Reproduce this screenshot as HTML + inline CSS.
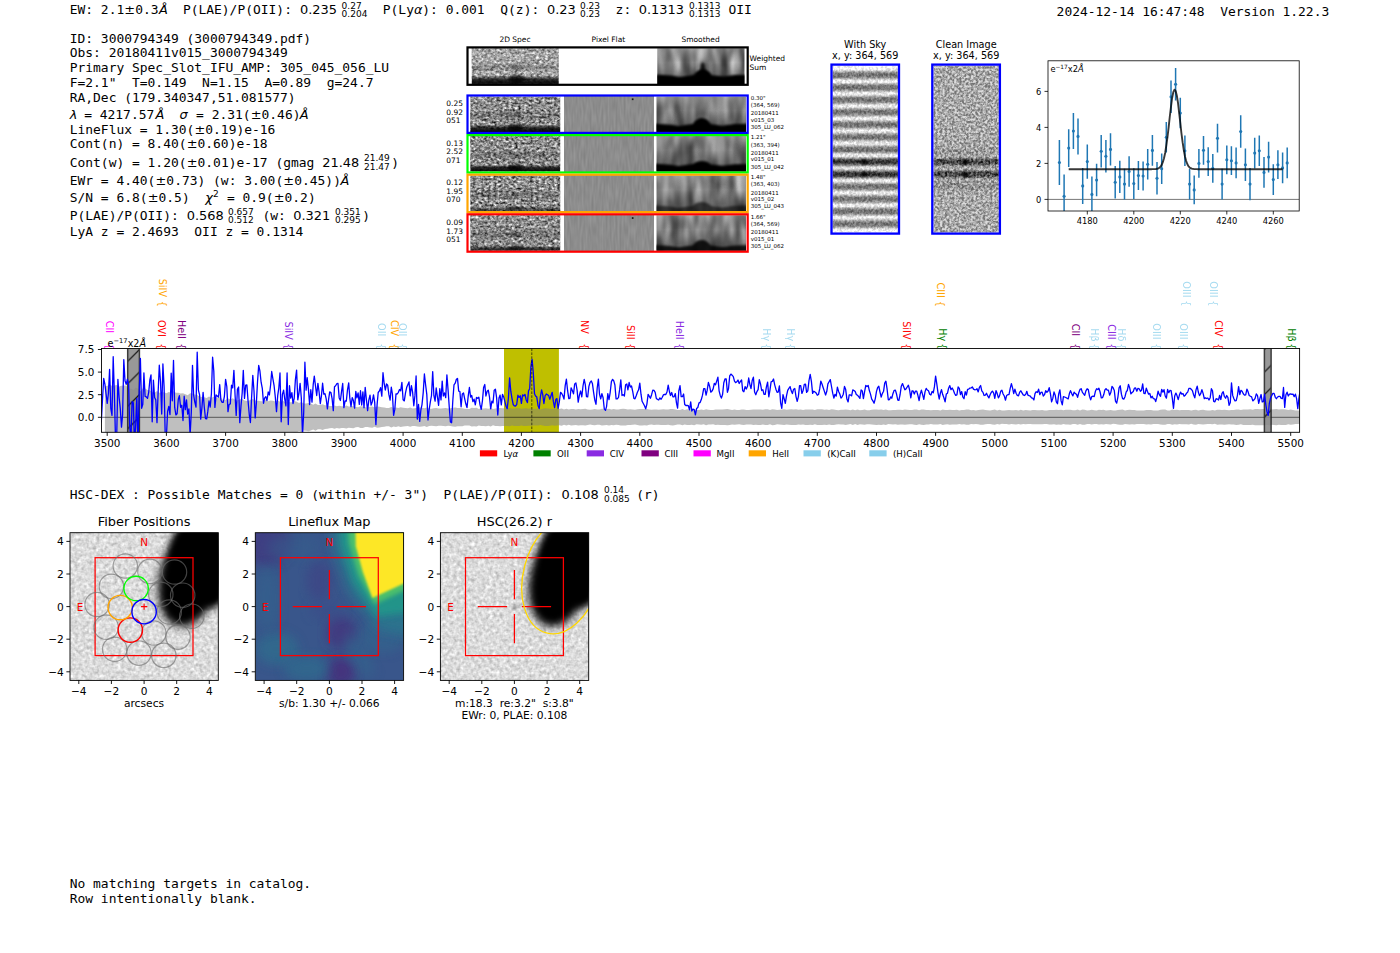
<!DOCTYPE html>
<html><head><meta charset="utf-8"><title>ELiXer report 3000794349</title>
<style>
html,body{margin:0;padding:0;background:#fff;overflow:hidden}
svg{display:block}
text{white-space:pre}
.m{font-family:"DejaVu Sans Mono","Liberation Mono",monospace}
.s{font-family:"DejaVu Sans","Liberation Sans",sans-serif}
.i{font-family:"DejaVu Sans","Liberation Sans",sans-serif;font-style:italic}
</style></head><body>
<svg width="1400" height="953" viewBox="0 0 1400 953">
<rect width="1400" height="953" fill="#fff"/>
<defs>
<filter id="n2d0" x="0" y="0" width="100%" height="100%" color-interpolation-filters="sRGB"><feTurbulence type="fractalNoise" baseFrequency="0.33 0.42" numOctaves="2" seed="3"/><feColorMatrix type="matrix" values="0.85 0.85 0 0 -0.3  0.85 0.85 0 0 -0.3  0.85 0.85 0 0 -0.3  0 0 0 0 1"/></filter>
<filter id="nsm0" x="0" y="0" width="100%" height="100%" color-interpolation-filters="sRGB"><feTurbulence type="fractalNoise" baseFrequency="0.085 0.03" numOctaves="2" seed="43"/><feColorMatrix type="matrix" values="0.55 0.55 0 0 -0.04  0.55 0.55 0 0 -0.04  0.55 0.55 0 0 -0.04  0 0 0 0 1"/></filter>
<filter id="n2d1" x="0" y="0" width="100%" height="100%" color-interpolation-filters="sRGB"><feTurbulence type="fractalNoise" baseFrequency="0.33 0.42" numOctaves="2" seed="8"/><feColorMatrix type="matrix" values="0.85 0.85 0 0 -0.3  0.85 0.85 0 0 -0.3  0.85 0.85 0 0 -0.3  0 0 0 0 1"/></filter>
<filter id="nsm1" x="0" y="0" width="100%" height="100%" color-interpolation-filters="sRGB"><feTurbulence type="fractalNoise" baseFrequency="0.085 0.03" numOctaves="2" seed="48"/><feColorMatrix type="matrix" values="0.55 0.55 0 0 -0.04  0.55 0.55 0 0 -0.04  0.55 0.55 0 0 -0.04  0 0 0 0 1"/></filter>
<filter id="n2d2" x="0" y="0" width="100%" height="100%" color-interpolation-filters="sRGB"><feTurbulence type="fractalNoise" baseFrequency="0.33 0.42" numOctaves="2" seed="15"/><feColorMatrix type="matrix" values="0.85 0.85 0 0 -0.3  0.85 0.85 0 0 -0.3  0.85 0.85 0 0 -0.3  0 0 0 0 1"/></filter>
<filter id="nsm2" x="0" y="0" width="100%" height="100%" color-interpolation-filters="sRGB"><feTurbulence type="fractalNoise" baseFrequency="0.085 0.03" numOctaves="2" seed="55"/><feColorMatrix type="matrix" values="0.55 0.55 0 0 -0.04  0.55 0.55 0 0 -0.04  0.55 0.55 0 0 -0.04  0 0 0 0 1"/></filter>
<filter id="n2d3" x="0" y="0" width="100%" height="100%" color-interpolation-filters="sRGB"><feTurbulence type="fractalNoise" baseFrequency="0.33 0.42" numOctaves="2" seed="21"/><feColorMatrix type="matrix" values="0.85 0.85 0 0 -0.3  0.85 0.85 0 0 -0.3  0.85 0.85 0 0 -0.3  0 0 0 0 1"/></filter>
<filter id="nsm3" x="0" y="0" width="100%" height="100%" color-interpolation-filters="sRGB"><feTurbulence type="fractalNoise" baseFrequency="0.085 0.03" numOctaves="2" seed="61"/><feColorMatrix type="matrix" values="0.55 0.55 0 0 -0.04  0.55 0.55 0 0 -0.04  0.55 0.55 0 0 -0.04  0 0 0 0 1"/></filter>
<filter id="n2d4" x="0" y="0" width="100%" height="100%" color-interpolation-filters="sRGB"><feTurbulence type="fractalNoise" baseFrequency="0.33 0.42" numOctaves="2" seed="34"/><feColorMatrix type="matrix" values="0.85 0.85 0 0 -0.3  0.85 0.85 0 0 -0.3  0.85 0.85 0 0 -0.3  0 0 0 0 1"/></filter>
<filter id="nsm4" x="0" y="0" width="100%" height="100%" color-interpolation-filters="sRGB"><feTurbulence type="fractalNoise" baseFrequency="0.085 0.03" numOctaves="2" seed="74"/><feColorMatrix type="matrix" values="0.55 0.55 0 0 -0.04  0.55 0.55 0 0 -0.04  0.55 0.55 0 0 -0.04  0 0 0 0 1"/></filter>
<filter id="npf" x="0" y="0" width="100%" height="100%" color-interpolation-filters="sRGB"><feTurbulence type="fractalNoise" baseFrequency="0.5 0.08" numOctaves="1" seed="5"/><feColorMatrix type="matrix" values="0.12 0 0 0 0.49  0.12 0 0 0 0.49  0.12 0 0 0 0.49  0 0 0 0 1"/></filter>
<filter id="b1" x="-20%" y="-50%" width="140%" height="200%"><feGaussianBlur stdDeviation="1.1"/></filter>
<filter id="b2" x="-30%" y="-30%" width="160%" height="160%"><feGaussianBlur stdDeviation="2"/></filter>
<filter id="b3" x="-30%" y="-30%" width="160%" height="160%"><feGaussianBlur stdDeviation="3.8"/></filter>
<filter id="b5" x="-30%" y="-30%" width="160%" height="160%"><feGaussianBlur stdDeviation="5.5"/></filter>
<linearGradient id="gb" x1="0" y1="0" x2="0" y2="1"><stop offset="0" stop-color="#000" stop-opacity="0"/><stop offset="0.45" stop-color="#000" stop-opacity="0.75"/><stop offset="1" stop-color="#000" stop-opacity="0.95"/></linearGradient>
<linearGradient id="gv" x1="0" y1="0" x2="0" y2="1"><stop offset="0" stop-color="#fff" stop-opacity="0.12"/><stop offset="0.4" stop-color="#000" stop-opacity="0"/><stop offset="0.8" stop-color="#000" stop-opacity="0.3"/></linearGradient>
</defs>
<text class="m" x="69.70" y="14.00" font-size="12.95">EW: 2.1</text>
<text class="s" x="124.30" y="14.00" font-size="12.95">±</text>
<text class="m" x="135.20" y="14.00" font-size="12.95">0.3</text>
<text class="i" x="159.10" y="14.00" font-size="12.95">Å</text>
<text class="m" x="182.90" y="14.00" font-size="12.95">P(LAE)/P(OII):</text>
<text class="s" x="300.00" y="14.00" font-size="12.95">0.235</text>
<text class="s" x="341.60" y="8.70" font-size="9.0">0.27</text>
<text class="s" x="341.60" y="17.30" font-size="9.0">0.204</text>
<text class="m" x="382.80" y="14.00" font-size="12.95">P(Ly</text>
<text class="i" x="414.00" y="14.00" font-size="12.95">α</text>
<text class="m" x="422.30" y="14.00" font-size="12.95">): 0.001</text>
<text class="m" x="500.30" y="14.00" font-size="12.95">Q(z):</text>
<text class="s" x="547.00" y="14.00" font-size="12.95">0.23</text>
<text class="s" x="580.00" y="8.70" font-size="9.0">0.23</text>
<text class="s" x="580.00" y="17.30" font-size="9.0">0.23</text>
<text class="m" x="615.60" y="14.00" font-size="12.95">z:</text>
<text class="s" x="638.70" y="14.00" font-size="12.95">0.1313</text>
<text class="s" x="689.00" y="8.70" font-size="9.0">0.1313</text>
<text class="s" x="689.00" y="17.30" font-size="9.0">0.1313</text>
<text class="m" x="728.50" y="14.00" font-size="12.95">OII</text>
<text class="m" x="1056.60" y="16.40" font-size="12.95">2024-12-14 16:47:48  Version 1.22.3</text>
<text class="m" x="69.70" y="42.50" font-size="12.95">ID: 3000794349 (3000794349.pdf)</text>
<text class="m" x="69.70" y="57.20" font-size="12.95">Obs: 20180411v015_3000794349</text>
<text class="m" x="69.70" y="72.00" font-size="12.95">Primary Spec_Slot_IFU_AMP: 305_045_056_LU</text>
<text class="m" x="69.70" y="87.00" font-size="12.95">F=2.1"  T=0.149  N=1.15  A=0.89  g=24.7</text>
<text class="m" x="69.70" y="101.80" font-size="12.95">RA,Dec (179.340347,51.081577)</text>
<text class="i" x="69.80" y="118.80" font-size="12.95">λ</text>
<text class="m" x="76.40" y="118.80" font-size="12.95"> = 4217.57</text>
<text class="i" x="155.60" y="118.80" font-size="12.95">Å</text>
<text class="i" x="179.60" y="118.80" font-size="12.95">σ</text>
<text class="m" x="188.30" y="118.80" font-size="12.95"> = 2.31(</text>
<text class="s" x="250.70" y="118.80" font-size="12.95">±</text>
<text class="m" x="261.55" y="118.80" font-size="12.95">0.46)</text>
<text class="i" x="299.80" y="118.80" font-size="12.95">Å</text>
<text class="m" x="69.70" y="133.50" font-size="12.95">LineFlux = 1.30(</text>
<text class="s" x="194.43" y="133.50" font-size="12.95">±</text>
<text class="m" x="205.28" y="133.50" font-size="12.95">0.19)e-16</text>
<text class="m" x="69.70" y="148.30" font-size="12.95">Cont(n) = 8.40(</text>
<text class="s" x="186.64" y="148.30" font-size="12.95">±</text>
<text class="m" x="197.49" y="148.30" font-size="12.95">0.60)e-18</text>
<text class="m" x="69.70" y="166.60" font-size="12.95">Cont(w) = 1.20(</text>
<text class="s" x="186.70" y="166.60" font-size="12.95">±</text>
<text class="m" x="197.55" y="166.60" font-size="12.95">0.01)e-17 (gmag </text>
<text class="s" x="322.30" y="166.60" font-size="12.95">21.48</text>
<text class="s" x="364.00" y="161.30" font-size="9.0">21.49</text>
<text class="s" x="364.00" y="169.90" font-size="9.0">21.47</text>
<text class="m" x="391.20" y="166.60" font-size="12.95">)</text>
<text class="m" x="69.70" y="184.80" font-size="12.95">EWr = 4.40(</text>
<text class="s" x="155.50" y="184.80" font-size="12.95">±</text>
<text class="m" x="166.35" y="184.80" font-size="12.95">0.73) (w: 3.00(</text>
<text class="s" x="283.35" y="184.80" font-size="12.95">±</text>
<text class="m" x="294.20" y="184.80" font-size="12.95">0.45))</text>
<text class="i" x="340.60" y="184.80" font-size="12.95">Å</text>
<text class="m" x="69.70" y="202.20" font-size="12.95">S/N = 6.8(</text>
<text class="s" x="147.70" y="202.20" font-size="12.95">±</text>
<text class="m" x="158.55" y="202.20" font-size="12.95">0.5)</text>
<text class="i" x="205.20" y="202.20" font-size="12.95">χ</text>
<text class="s" x="213.00" y="196.70" font-size="9.0">2</text>
<text class="m" x="219.10" y="202.20" font-size="12.95"> = 0.9(</text>
<text class="s" x="273.70" y="202.20" font-size="12.95">±</text>
<text class="m" x="284.55" y="202.20" font-size="12.95">0.2)</text>
<text class="m" x="69.70" y="219.80" font-size="12.95">P(LAE)/P(OII):</text>
<text class="s" x="186.70" y="219.80" font-size="12.95">0.568</text>
<text class="s" x="228.00" y="214.50" font-size="9.0">0.657</text>
<text class="s" x="228.00" y="223.10" font-size="9.0">0.512</text>
<text class="m" x="262.50" y="219.80" font-size="12.95">(w:</text>
<text class="s" x="293.20" y="219.80" font-size="12.95">0.321</text>
<text class="s" x="335.00" y="214.50" font-size="9.0">0.351</text>
<text class="s" x="335.00" y="223.10" font-size="9.0">0.295</text>
<text class="m" x="362.30" y="219.80" font-size="12.95">)</text>
<text class="m" x="69.70" y="236.00" font-size="12.95">LyA z = 2.4693  OII z = 0.1314</text>
<text class="m" x="69.70" y="498.50" font-size="12.95">HSC-DEX : Possible Matches = 0 (within +/- 3")  P(LAE)/P(OII):</text>
<text class="s" x="561.60" y="498.50" font-size="12.95">0.108</text>
<text class="s" x="604.00" y="493.20" font-size="9.0">0.14</text>
<text class="s" x="604.00" y="501.80" font-size="9.0">0.085</text>
<text class="m" x="636.20" y="498.50" font-size="12.95">(r)</text>
<text class="m" x="69.70" y="887.70" font-size="12.95">No matching targets in catalog.</text>
<text class="m" x="69.70" y="903.00" font-size="12.95">Row intentionally blank.</text>
<clipPath id="cs"><rect x="101.5" y="348.5" width="1198.1" height="83.80000000000001"/></clipPath>
<pattern id="hat" width="22.5" height="22.5" patternUnits="userSpaceOnUse" patternTransform="translate(3,13.5)"><rect width="22.5" height="22.5" fill="#8a8a8a"/><path d="M-2,24.5 L24.5,-2 M-2,2 L2,-2 M20.5,24.5 L24.5,20.5" stroke="#000" stroke-width="1.25"/></pattern>
<g fill="#ff00ff" opacity="1" font-size="9.7"><text class="s" fill="#ff00ff" transform="translate(105.8,320.7) rotate(90)">CII</text><text class="s" fill="#ff00ff" text-anchor="end" transform="translate(105.8,349.5) rotate(90)">{</text></g>
<g fill="#ffa500" opacity="1" font-size="9.7"><text class="s" fill="#ffa500" transform="translate(159.1,278.7) rotate(90)">SiIV</text><text class="s" fill="#ffa500" text-anchor="end" transform="translate(159.1,306.9) rotate(90)">{</text></g>
<g fill="#ff0000" opacity="1" font-size="9.7"><text class="s" fill="#ff0000" transform="translate(157.6,320.0) rotate(90)">OVI</text><text class="s" fill="#ff0000" text-anchor="end" transform="translate(157.6,349.5) rotate(90)">{</text></g>
<g fill="#800080" opacity="1" font-size="9.7"><text class="s" fill="#800080" transform="translate(177.8,320.0) rotate(90)">HeII</text><text class="s" fill="#800080" text-anchor="end" transform="translate(177.8,349.5) rotate(90)">{</text></g>
<g fill="#8a2be2" opacity="1" font-size="9.7"><text class="s" fill="#8a2be2" transform="translate(285.1,321.5) rotate(90)">SiIV</text><text class="s" fill="#8a2be2" text-anchor="end" transform="translate(285.1,349.5) rotate(90)">{</text></g>
<g fill="#87ceeb" opacity="0.75" font-size="9.7"><text class="s" fill="#87ceeb" transform="translate(377.6,323.0) rotate(90)">OII</text><text class="s" fill="#87ceeb" text-anchor="end" transform="translate(377.6,349.5) rotate(90)">{</text></g>
<g fill="#ffa500" opacity="1" font-size="9.7"><text class="s" fill="#ffa500" transform="translate(390.8,320.0) rotate(90)">CIV</text><text class="s" fill="#ffa500" text-anchor="end" transform="translate(390.8,349.5) rotate(90)">{</text></g>
<g fill="#87ceeb" opacity="0.75" font-size="9.7"><text class="s" fill="#87ceeb" transform="translate(399.1,323.0) rotate(90)">OII</text><text class="s" fill="#87ceeb" text-anchor="end" transform="translate(399.1,349.5) rotate(90)">{</text></g>
<g fill="#ff0000" opacity="1" font-size="9.7"><text class="s" fill="#ff0000" transform="translate(580.8,320.0) rotate(90)">NV</text><text class="s" fill="#ff0000" text-anchor="end" transform="translate(580.8,349.5) rotate(90)">{</text></g>
<g fill="#ff0000" opacity="1" font-size="9.7"><text class="s" fill="#ff0000" transform="translate(627.1,325.0) rotate(90)">SiII</text><text class="s" fill="#ff0000" text-anchor="end" transform="translate(627.1,349.5) rotate(90)">{</text></g>
<g fill="#8a2be2" opacity="1" font-size="9.7"><text class="s" fill="#8a2be2" transform="translate(676.1,320.7) rotate(90)">HeII</text><text class="s" fill="#8a2be2" text-anchor="end" transform="translate(676.1,349.5) rotate(90)">{</text></g>
<g fill="#87ceeb" opacity="0.75" font-size="9.7"><text class="s" fill="#87ceeb" transform="translate(763.1,328.2) rotate(90)">Hγ</text><text class="s" fill="#87ceeb" text-anchor="end" transform="translate(763.1,349.5) rotate(90)">{</text></g>
<g fill="#87ceeb" opacity="0.75" font-size="9.7"><text class="s" fill="#87ceeb" transform="translate(787.1,328.2) rotate(90)">Hγ</text><text class="s" fill="#87ceeb" text-anchor="end" transform="translate(787.1,349.5) rotate(90)">{</text></g>
<g fill="#ff0000" opacity="1" font-size="9.7"><text class="s" fill="#ff0000" transform="translate(903.3,321.2) rotate(90)">SiIV</text><text class="s" fill="#ff0000" text-anchor="end" transform="translate(903.3,349.5) rotate(90)">{</text></g>
<g fill="#ffa500" opacity="1" font-size="9.7"><text class="s" fill="#ffa500" transform="translate(937.4,282.5) rotate(90)">CIII</text><text class="s" fill="#ffa500" text-anchor="end" transform="translate(937.4,306.9) rotate(90)">{</text></g>
<g fill="#008000" opacity="1" font-size="9.7"><text class="s" fill="#008000" transform="translate(939.0,328.2) rotate(90)">Hγ</text><text class="s" fill="#008000" text-anchor="end" transform="translate(939.0,349.5) rotate(90)">{</text></g>
<g fill="#800080" opacity="1" font-size="9.7"><text class="s" fill="#800080" transform="translate(1072.4,323.7) rotate(90)">CII</text><text class="s" fill="#800080" text-anchor="end" transform="translate(1072.4,349.5) rotate(90)">{</text></g>
<g fill="#87ceeb" opacity="0.75" font-size="9.7"><text class="s" fill="#87ceeb" transform="translate(1090.6,328.2) rotate(90)">Hβ</text><text class="s" fill="#87ceeb" text-anchor="end" transform="translate(1090.6,349.5) rotate(90)">{</text></g>
<g fill="#8a2be2" opacity="1" font-size="9.7"><text class="s" fill="#8a2be2" transform="translate(1108.1,324.2) rotate(90)">CIII</text><text class="s" fill="#8a2be2" text-anchor="end" transform="translate(1108.1,349.5) rotate(90)">{</text></g>
<g fill="#87ceeb" opacity="0.75" font-size="9.7"><text class="s" fill="#87ceeb" transform="translate(1118.1,328.2) rotate(90)">Hδ</text><text class="s" fill="#87ceeb" text-anchor="end" transform="translate(1118.1,349.5) rotate(90)">{</text></g>
<g fill="#87ceeb" opacity="0.75" font-size="9.7"><text class="s" fill="#87ceeb" transform="translate(1152.6,323.3) rotate(90)">OIII</text><text class="s" fill="#87ceeb" text-anchor="end" transform="translate(1152.6,349.5) rotate(90)">{</text></g>
<g fill="#87ceeb" opacity="0.75" font-size="9.7"><text class="s" fill="#87ceeb" transform="translate(1179.8,323.3) rotate(90)">OIII</text><text class="s" fill="#87ceeb" text-anchor="end" transform="translate(1179.8,349.5) rotate(90)">{</text></g>
<g fill="#87ceeb" opacity="0.75" font-size="9.7"><text class="s" fill="#87ceeb" transform="translate(1182.6,281.3) rotate(90)">OIII</text><text class="s" fill="#87ceeb" text-anchor="end" transform="translate(1182.6,306.5) rotate(90)">{</text></g>
<g fill="#87ceeb" opacity="0.75" font-size="9.7"><text class="s" fill="#87ceeb" transform="translate(1210.1,281.3) rotate(90)">OIII</text><text class="s" fill="#87ceeb" text-anchor="end" transform="translate(1210.1,306.5) rotate(90)">{</text></g>
<g fill="#ff0000" opacity="1" font-size="9.7"><text class="s" fill="#ff0000" transform="translate(1214.6,320.3) rotate(90)">CIV</text><text class="s" fill="#ff0000" text-anchor="end" transform="translate(1214.6,349.5) rotate(90)">{</text></g>
<g fill="#008000" opacity="1" font-size="9.7"><text class="s" fill="#008000" transform="translate(1288.1,328.2) rotate(90)">Hβ</text><text class="s" fill="#008000" text-anchor="end" transform="translate(1288.1,349.5) rotate(90)">{</text></g>
<rect x="101.5" y="348.5" width="1198.1" height="83.80000000000001" fill="#fff"/>
<g clip-path="url(#cs)">
<rect x="504.0" y="348.5" width="54.9" height="83.80000000000001" fill="#bfbf00"/>
<polygon points="104.9,386.2 107.2,385.9 109.6,384.1 112.0,385.9 114.4,385.5 116.7,385.0 119.1,386.6 121.5,385.7 123.8,385.6 126.2,385.4 128.6,388.9 130.9,388.5 133.3,389.9 135.7,387.4 138.0,388.4 140.4,391.5 142.8,388.3 145.1,388.6 147.5,389.9 149.9,390.2 152.2,392.0 154.6,392.7 157.0,390.9 159.3,392.7 161.7,392.4 164.1,392.3 166.4,393.2 168.8,392.0 171.2,392.4 173.5,391.3 175.9,392.8 178.3,392.7 180.6,393.5 183.0,393.3 185.4,394.3 187.7,395.2 190.1,393.2 192.5,393.6 194.8,394.4 197.2,395.1 199.6,396.6 201.9,397.1 204.3,397.2 206.7,398.1 209.0,396.4 211.4,397.8 213.8,396.8 216.1,398.4 218.5,397.1 220.9,397.7 223.2,400.2 225.6,400.0 228.0,398.3 230.3,399.4 232.7,398.2 235.1,399.8 237.4,400.6 239.8,399.3 242.2,399.0 244.5,400.4 246.9,400.9 249.3,400.4 251.6,398.9 254.0,399.5 256.4,401.1 258.7,400.8 261.1,401.3 263.5,401.4 265.8,399.7 268.2,401.3 270.6,400.5 272.9,400.8 275.3,401.5 277.7,400.3 280.0,401.7 282.4,400.6 284.8,401.9 287.1,401.5 289.5,402.2 291.9,402.3 294.2,401.0 296.6,401.7 299.0,403.0 301.3,402.0 303.7,403.6 306.1,403.5 308.4,402.9 310.8,403.5 313.2,404.8 315.5,403.4 317.9,405.0 320.3,405.0 322.6,404.3 325.0,405.2 327.4,405.5 329.7,406.0 332.1,406.1 334.5,405.5 336.8,406.2 339.2,405.8 341.6,406.3 343.9,406.3 346.3,405.6 348.7,406.4 351.0,406.4 353.4,406.0 355.8,407.1 358.1,407.2 360.5,406.2 362.9,406.4 365.2,407.3 367.6,407.4 370.0,406.7 372.3,406.5 374.7,407.6 377.1,406.6 379.4,406.8 381.8,407.2 384.2,407.5 386.5,408.0 388.9,408.1 391.3,406.9 393.6,408.0 396.0,407.4 398.4,408.0 400.7,407.3 403.1,407.7 405.5,408.1 407.8,408.3 410.2,407.6 412.6,408.4 414.9,408.3 417.3,407.8 419.7,407.5 422.0,407.8 424.4,408.3 426.8,407.4 429.1,408.4 431.5,408.7 433.9,408.3 436.2,408.1 438.6,408.6 441.0,408.5 443.3,408.3 445.7,408.0 448.1,408.6 450.4,408.3 452.8,407.7 455.2,407.6 457.5,408.0 459.9,408.0 462.3,408.2 464.6,408.7 467.0,408.9 469.4,408.9 471.7,407.8 474.1,408.1 476.5,407.8 478.8,409.0 481.2,408.2 483.6,408.4 485.9,408.2 488.3,408.7 490.7,407.9 493.0,409.0 495.4,408.5 497.8,408.2 500.1,408.1 502.5,408.3 504.9,408.3 507.2,408.2 509.6,408.1 512.0,408.8 514.3,408.4 516.7,408.2 519.1,408.2 521.4,408.8 523.8,408.4 526.2,408.3 528.5,408.7 530.9,408.6 533.3,408.9 535.6,408.7 538.0,408.7 540.4,409.4 542.7,408.7 545.1,408.3 547.5,408.5 549.8,408.7 552.2,409.1 554.6,408.7 556.9,408.9 559.3,409.1 561.7,408.6 564.0,409.5 566.4,408.8 568.8,409.6 571.1,409.0 573.5,409.1 575.9,409.4 578.2,408.9 580.6,409.2 583.0,409.0 585.3,408.7 587.7,409.5 590.1,409.7 592.4,409.4 594.8,409.0 597.2,409.6 599.5,409.6 601.9,408.8 604.3,409.1 606.6,409.3 609.0,408.8 611.4,409.5 613.7,409.1 616.1,409.6 618.5,409.4 620.8,408.9 623.2,408.8 625.6,408.9 627.9,409.4 630.3,409.2 632.7,409.5 635.0,409.7 637.4,409.3 639.8,409.0 642.1,409.0 644.5,409.1 646.9,408.9 649.2,409.6 651.6,409.7 654.0,409.4 656.3,409.6 658.7,409.7 661.1,409.5 663.4,409.3 665.8,409.4 668.2,409.6 670.5,409.1 672.9,408.9 675.3,409.5 677.6,409.9 680.0,410.0 682.4,409.1 684.7,410.0 687.1,409.3 689.5,409.4 691.8,409.7 694.2,409.2 696.6,410.0 699.0,409.9 701.3,409.6 703.7,410.1 706.1,409.2 708.4,409.8 710.8,409.9 713.2,410.0 715.5,409.4 717.9,409.6 720.3,409.4 722.6,409.4 725.0,409.2 727.4,409.1 729.7,409.4 732.1,409.9 734.5,409.6 736.8,409.9 739.2,410.1 741.6,409.6 743.9,409.4 746.3,410.0 748.7,409.9 751.0,409.8 753.4,409.4 755.8,409.6 758.1,409.5 760.5,409.4 762.9,409.8 765.2,409.3 767.6,409.2 770.0,410.1 772.3,409.2 774.7,409.4 777.1,410.1 779.4,409.7 781.8,409.5 784.2,409.2 786.5,409.8 788.9,409.6 791.3,409.3 793.6,409.4 796.0,409.2 798.4,409.7 800.7,409.6 803.1,410.0 805.5,409.5 807.8,409.4 810.2,409.6 812.6,409.5 814.9,410.0 817.3,409.3 819.7,409.2 822.0,409.2 824.4,409.7 826.8,409.5 829.1,410.0 831.5,409.3 833.9,409.4 836.2,409.9 838.6,410.2 841.0,409.8 843.3,409.7 845.7,409.5 848.1,409.8 850.4,410.3 852.8,409.5 855.2,410.3 857.5,409.5 859.9,410.2 862.3,410.0 864.6,409.5 867.0,410.2 869.4,410.2 871.7,409.8 874.1,409.6 876.5,409.5 878.8,409.7 881.2,409.4 883.6,409.9 885.9,409.4 888.3,410.3 890.7,410.2 893.0,409.9 895.4,410.1 897.8,409.7 900.1,409.8 902.5,409.9 904.9,409.5 907.2,409.8 909.6,410.1 912.0,410.0 914.3,409.6 916.7,409.5 919.1,410.2 921.4,409.6 923.8,409.5 926.2,409.9 928.5,409.9 930.9,410.3 933.3,409.9 935.6,410.0 938.0,409.9 940.4,410.5 942.7,409.5 945.1,410.0 947.5,410.1 949.8,409.7 952.2,409.9 954.6,410.0 956.9,409.8 959.3,410.4 961.7,410.0 964.0,410.1 966.4,409.6 968.8,409.6 971.1,410.3 973.5,410.1 975.9,410.4 978.2,410.1 980.6,409.7 983.0,409.6 985.3,410.1 987.7,410.2 990.1,410.4 992.4,409.9 994.8,409.6 997.2,410.4 999.5,409.8 1001.9,410.6 1004.3,410.4 1006.6,410.3 1009.0,409.9 1011.4,410.2 1013.7,410.2 1016.1,409.9 1018.5,410.5 1020.8,409.8 1023.2,410.4 1025.6,410.1 1027.9,410.3 1030.3,410.4 1032.7,410.0 1035.0,410.1 1037.4,410.2 1039.8,410.2 1042.1,410.0 1044.5,410.4 1046.9,410.4 1049.2,409.9 1051.6,409.9 1054.0,410.0 1056.3,409.7 1058.7,410.0 1061.1,409.7 1063.4,410.3 1065.8,409.8 1068.2,409.8 1070.5,409.7 1072.9,410.3 1075.3,410.3 1077.6,409.6 1080.0,410.4 1082.4,409.6 1084.7,409.7 1087.1,410.4 1089.5,410.3 1091.8,409.8 1094.2,410.3 1096.6,410.5 1098.9,409.7 1101.3,410.1 1103.7,409.8 1106.0,410.4 1108.4,410.2 1110.8,409.9 1113.1,410.6 1115.5,410.4 1117.9,409.9 1120.2,409.7 1122.6,409.6 1125.0,410.5 1127.3,410.1 1129.7,409.8 1132.1,410.1 1134.4,409.9 1136.8,410.4 1139.2,410.5 1141.5,410.5 1143.9,410.5 1146.3,410.0 1148.6,410.1 1151.0,410.0 1153.4,410.4 1155.7,410.4 1158.1,410.4 1160.5,409.7 1162.8,409.6 1165.2,409.6 1167.6,410.5 1169.9,410.5 1172.3,409.6 1174.7,410.1 1177.0,409.8 1179.4,410.2 1181.8,410.1 1184.1,410.1 1186.5,410.1 1188.9,410.0 1191.2,410.6 1193.6,409.9 1196.0,409.7 1198.3,410.4 1200.7,410.1 1203.1,409.8 1205.4,410.2 1207.8,410.4 1210.2,410.4 1212.5,410.1 1214.9,410.6 1217.3,409.7 1219.6,409.8 1222.0,409.9 1224.4,409.7 1226.7,409.9 1229.1,410.2 1231.5,410.0 1233.8,410.0 1236.2,409.5 1238.6,409.6 1240.9,410.1 1243.3,409.4 1245.7,409.5 1248.0,409.4 1250.4,409.3 1252.8,409.7 1255.1,409.1 1257.5,409.1 1259.9,409.2 1262.2,409.1 1264.6,409.0 1267.0,409.4 1269.3,408.9 1271.7,409.6 1274.1,409.3 1276.4,409.1 1278.8,409.6 1281.2,409.3 1283.5,409.2 1285.9,409.4 1288.3,410.1 1290.7,409.5 1293.0,410.0 1295.4,410.5 1297.8,410.4 1300.1,410.7 1302.5,410.9 1304.9,411.1 1304.9,423.3 1302.5,423.5 1300.1,423.7 1297.8,424.0 1295.4,423.9 1293.0,424.4 1290.7,424.8 1288.3,424.3 1285.9,424.9 1283.5,425.1 1281.2,425.0 1278.8,424.8 1276.4,425.3 1274.1,425.1 1271.7,424.7 1269.3,425.4 1267.0,425.0 1264.6,425.3 1262.2,425.3 1259.9,425.2 1257.5,425.3 1255.1,425.3 1252.8,424.7 1250.4,425.1 1248.0,425.0 1245.7,424.9 1243.3,425.0 1240.9,424.3 1238.6,424.8 1236.2,424.9 1233.8,424.4 1231.5,424.4 1229.1,424.2 1226.7,424.4 1224.4,424.7 1222.0,424.5 1219.6,424.6 1217.3,424.7 1214.9,423.8 1212.5,424.3 1210.2,424.0 1207.8,424.0 1205.4,424.2 1203.1,424.6 1200.7,424.3 1198.3,424.0 1196.0,424.7 1193.6,424.5 1191.2,423.8 1188.9,424.4 1186.5,424.2 1184.1,424.3 1181.8,424.3 1179.4,424.1 1177.0,424.6 1174.7,424.3 1172.3,424.8 1169.9,423.9 1167.6,423.9 1165.2,424.7 1162.8,424.8 1160.5,424.6 1158.1,424.0 1155.7,424.0 1153.4,424.0 1151.0,424.4 1148.6,424.3 1146.3,424.4 1143.9,423.9 1141.5,423.9 1139.2,423.9 1136.8,424.0 1134.4,424.5 1132.1,424.3 1129.7,424.6 1127.3,424.3 1125.0,423.9 1122.6,424.8 1120.2,424.7 1117.9,424.5 1115.5,424.0 1113.1,423.8 1110.8,424.5 1108.4,424.2 1106.0,423.9 1103.7,424.6 1101.3,424.2 1098.9,424.6 1096.6,423.9 1094.2,424.1 1091.8,424.5 1089.5,424.1 1087.1,424.0 1084.7,424.7 1082.4,424.8 1080.0,424.0 1077.6,424.7 1075.3,424.1 1072.9,424.1 1070.5,424.7 1068.2,424.6 1065.8,424.6 1063.4,424.1 1061.1,424.7 1058.7,424.4 1056.3,424.7 1054.0,424.3 1051.6,424.5 1049.2,424.4 1046.9,424.0 1044.5,424.0 1042.1,424.3 1039.8,424.2 1037.4,424.2 1035.0,424.3 1032.7,424.3 1030.3,424.0 1027.9,424.1 1025.6,424.3 1023.2,423.9 1020.8,424.5 1018.5,423.9 1016.1,424.4 1013.7,424.2 1011.4,424.1 1009.0,424.5 1006.6,424.0 1004.3,424.0 1001.9,423.8 999.5,424.6 997.2,424.0 994.8,424.7 992.4,424.4 990.1,424.0 987.7,424.1 985.3,424.3 983.0,424.7 980.6,424.7 978.2,424.3 975.9,424.0 973.5,424.3 971.1,424.1 968.8,424.8 966.4,424.8 964.0,424.3 961.7,424.4 959.3,423.9 956.9,424.6 954.6,424.4 952.2,424.5 949.8,424.7 947.5,424.3 945.1,424.4 942.7,424.9 940.4,423.9 938.0,424.5 935.6,424.4 933.3,424.5 930.9,424.1 928.5,424.5 926.2,424.5 923.8,424.9 921.4,424.8 919.1,424.2 916.7,424.9 914.3,424.8 912.0,424.3 909.6,424.3 907.2,424.5 904.9,424.8 902.5,424.5 900.1,424.6 897.8,424.7 895.4,424.3 893.0,424.5 890.7,424.2 888.3,424.1 885.9,425.0 883.6,424.5 881.2,425.0 878.8,424.7 876.5,424.9 874.1,424.8 871.7,424.6 869.4,424.2 867.0,424.2 864.6,424.8 862.3,424.4 859.9,424.2 857.5,424.9 855.2,424.1 852.8,424.9 850.4,424.1 848.1,424.6 845.7,424.9 843.3,424.6 841.0,424.5 838.6,424.2 836.2,424.4 833.9,425.0 831.5,425.0 829.1,424.4 826.8,424.9 824.4,424.7 822.0,425.1 819.7,425.1 817.3,425.0 814.9,424.3 812.6,424.9 810.2,424.8 807.8,425.0 805.5,424.9 803.1,424.4 800.7,424.8 798.4,424.6 796.0,425.1 793.6,425.0 791.3,425.1 788.9,424.8 786.5,424.6 784.2,425.1 781.8,424.8 779.4,424.6 777.1,424.3 774.7,424.9 772.3,425.2 770.0,424.3 767.6,425.1 765.2,425.0 762.9,424.6 760.5,425.0 758.1,424.9 755.8,424.8 753.4,425.0 751.0,424.6 748.7,424.5 746.3,424.4 743.9,425.0 741.6,424.7 739.2,424.3 736.8,424.4 734.5,424.8 732.1,424.5 729.7,425.0 727.4,425.3 725.0,425.1 722.6,425.0 720.3,424.9 717.9,424.8 715.5,424.9 713.2,424.3 710.8,424.4 708.4,424.5 706.1,425.2 703.7,424.3 701.3,424.8 699.0,424.5 696.6,424.3 694.2,425.2 691.8,424.7 689.5,424.9 687.1,425.1 684.7,424.4 682.4,425.3 680.0,424.4 677.6,424.5 675.3,424.9 672.9,425.4 670.5,425.3 668.2,424.7 665.8,424.9 663.4,425.1 661.1,424.9 658.7,424.7 656.3,424.7 654.0,424.9 651.6,424.6 649.2,424.7 646.9,425.5 644.5,425.2 642.1,425.4 639.8,425.4 637.4,425.0 635.0,424.6 632.7,424.8 630.3,425.1 627.9,424.9 625.6,425.5 623.2,425.5 620.8,425.4 618.5,425.0 616.1,424.8 613.7,425.3 611.4,424.9 609.0,425.5 606.6,425.1 604.3,425.3 601.9,425.6 599.5,424.8 597.2,424.8 594.8,425.3 592.4,424.9 590.1,424.6 587.7,424.9 585.3,425.6 583.0,425.3 580.6,425.2 578.2,425.4 575.9,424.9 573.5,425.2 571.1,425.4 568.8,424.8 566.4,425.6 564.0,424.8 561.7,425.7 559.3,425.3 556.9,425.5 554.6,425.7 552.2,425.3 549.8,425.7 547.5,425.9 545.1,426.0 542.7,425.6 540.4,425.0 538.0,425.6 535.6,425.6 533.3,425.4 530.9,425.7 528.5,425.7 526.2,426.0 523.8,426.0 521.4,425.5 519.1,426.1 516.7,426.1 514.3,425.9 512.0,425.5 509.6,426.2 507.2,426.1 504.9,426.0 502.5,426.1 500.1,426.3 497.8,426.1 495.4,425.9 493.0,425.3 490.7,426.5 488.3,425.7 485.9,426.2 483.6,425.9 481.2,426.1 478.8,425.4 476.5,426.5 474.1,426.2 471.7,426.5 469.4,425.4 467.0,425.5 464.6,425.6 462.3,426.2 459.9,426.3 457.5,426.3 455.2,426.7 452.8,426.6 450.4,426.0 448.1,425.7 445.7,426.3 443.3,426.0 441.0,425.8 438.6,425.7 436.2,426.2 433.9,426.0 431.5,425.7 429.1,425.9 426.8,426.9 424.4,426.1 422.0,426.5 419.7,426.8 417.3,426.5 414.9,426.1 412.6,425.9 410.2,426.7 407.8,426.1 405.5,426.2 403.1,426.6 400.7,427.0 398.4,426.3 396.0,426.9 393.6,426.4 391.3,427.4 388.9,426.2 386.5,426.3 384.2,426.8 381.8,427.1 379.4,427.5 377.1,427.7 374.7,426.7 372.3,427.8 370.0,427.6 367.6,426.9 365.2,427.0 362.9,427.9 360.5,428.1 358.1,427.1 355.8,427.2 353.4,428.3 351.0,427.9 348.7,427.8 346.3,428.6 343.9,427.9 341.6,428.0 339.2,428.5 336.8,428.1 334.5,428.8 332.1,428.1 329.7,428.3 327.4,428.8 325.0,429.0 322.6,429.9 320.3,429.2 317.9,429.3 315.5,430.8 313.2,429.4 310.8,430.6 308.4,431.3 306.1,430.7 303.7,430.6 301.3,432.1 299.0,431.2 296.6,432.5 294.2,433.1 291.9,431.9 289.5,432.0 287.1,432.7 284.8,432.2 282.4,433.5 280.0,432.4 277.7,433.8 275.3,432.7 272.9,433.3 270.6,433.6 268.2,432.8 265.8,434.3 263.5,432.7 261.1,432.9 258.7,433.3 256.4,433.0 254.0,434.6 251.6,435.2 249.3,433.7 246.9,433.2 244.5,433.7 242.2,435.0 239.8,434.7 237.4,433.5 235.1,434.3 232.7,435.8 230.3,434.6 228.0,435.8 225.6,434.1 223.2,433.9 220.9,436.3 218.5,436.9 216.1,435.7 213.8,437.2 211.4,436.3 209.0,437.5 206.7,435.9 204.3,436.8 201.9,436.9 199.6,437.4 197.2,438.8 194.8,439.5 192.5,440.3 190.1,440.7 187.7,438.8 185.4,439.6 183.0,440.6 180.6,440.4 178.3,441.2 175.9,441.1 173.5,442.5 171.2,441.5 168.8,441.9 166.4,440.6 164.1,441.5 161.7,441.5 159.3,441.1 157.0,442.9 154.6,441.2 152.2,441.8 149.9,443.6 147.5,443.9 145.1,445.2 142.8,445.4 140.4,442.4 138.0,445.3 135.7,446.3 133.3,443.9 130.9,445.2 128.6,444.8 126.2,448.2 123.8,448.0 121.5,448.0 119.1,447.1 116.7,448.6 114.4,448.1 112.0,447.8 109.6,449.5 107.2,447.8 104.9,447.4" fill="#808080" fill-opacity="0.5"/>
<line x1="101.5" x2="1299.6" y1="417.3" y2="417.3" stroke="#000" stroke-opacity="0.55" stroke-width="1"/>
<rect x="127.7" y="346.5" width="11.7" height="87.80000000000001" fill="url(#hat)" stroke="#222" stroke-width="1.5" opacity="0.88"/>
<rect x="1264.4" y="346.5" width="6.7" height="87.80000000000001" fill="url(#hat)" stroke="#222" stroke-width="1.5" opacity="0.88"/>
<polyline points="93.0,371.5 94.2,396.2 95.4,411.6 96.6,429.2 97.8,398.2 99.0,401.3 100.1,423.9 101.3,421.6 102.5,399.5 103.7,378.4 104.9,384.1 106.1,394.1 107.2,403.4 108.4,393.5 109.6,369.4 110.8,408.3 112.0,415.3 113.2,356.7 114.4,394.7 115.5,439.0 116.7,437.2 117.9,379.3 119.1,397.2 120.3,408.6 121.5,427.2 122.6,414.7 123.8,359.6 125.0,380.8 126.2,384.4 127.4,379.1 128.6,384.3 129.7,426.3 130.9,439.9 132.1,401.6 133.3,402.8 134.5,444.4 135.7,424.5 136.8,398.3 138.0,444.4 139.2,391.4 140.4,358.5 141.6,408.3 142.8,404.3 143.9,372.9 145.1,396.4 146.3,396.9 147.5,398.4 148.7,392.3 149.9,379.6 151.0,374.8 152.2,421.8 153.4,380.1 154.6,397.5 155.8,399.9 157.0,422.7 158.1,392.9 159.3,365.2 160.5,381.6 161.7,414.0 162.9,364.0 164.1,386.9 165.2,434.5 166.4,437.2 167.6,411.4 168.8,406.5 170.0,414.6 171.2,373.2 172.3,400.8 173.5,360.3 174.7,407.4 175.9,414.9 177.1,413.8 178.3,399.3 179.4,395.7 180.6,407.3 181.8,405.3 183.0,420.5 184.2,396.2 185.4,409.6 186.5,399.8 187.7,414.1 188.9,408.8 190.1,435.4 191.3,412.1 192.5,365.3 193.6,395.0 194.8,402.1 196.0,407.0 197.2,352.2 198.4,390.2 199.6,394.9 200.7,419.2 201.9,407.9 203.1,392.4 204.3,407.2 205.5,418.6 206.7,418.9 207.8,411.4 209.0,401.0 210.2,407.0 211.4,393.8 212.6,357.2 213.8,371.0 214.9,407.4 216.1,394.9 217.3,395.9 218.5,397.0 219.7,384.6 220.9,400.0 222.0,402.3 223.2,402.3 224.4,396.3 225.6,379.4 226.8,386.5 228.0,411.6 229.1,404.5 230.3,403.9 231.5,385.2 232.7,387.9 233.9,370.3 235.1,395.5 236.2,415.4 237.4,389.4 238.6,387.0 239.8,422.7 241.0,405.7 242.2,392.8 243.3,370.3 244.5,398.4 245.7,385.1 246.9,385.0 248.1,401.5 249.3,414.8 250.4,422.5 251.6,397.4 252.8,375.3 254.0,391.0 255.2,417.9 256.4,402.6 257.5,382.0 258.7,365.3 259.9,370.9 261.1,382.2 262.3,388.3 263.5,403.3 264.6,398.1 265.8,396.6 267.0,400.5 268.2,392.0 269.4,395.0 270.6,385.0 271.7,371.5 272.9,378.9 274.1,385.7 275.3,397.0 276.5,411.7 277.7,395.7 278.8,388.1 280.0,373.0 281.2,421.8 282.4,394.4 283.6,390.2 284.8,399.5 285.9,405.9 287.1,372.9 288.3,424.5 289.5,385.7 290.7,398.1 291.9,392.7 293.0,403.5 294.2,398.3 295.4,379.6 296.6,370.1 297.8,399.8 299.0,393.1 300.1,383.3 301.3,397.7 302.5,435.4 303.7,412.8 304.9,362.2 306.1,390.2 307.2,377.7 308.4,388.9 309.6,404.5 310.8,389.7 312.0,402.1 313.2,384.7 314.3,376.2 315.5,386.0 316.7,395.5 317.9,383.4 319.1,392.0 320.3,403.6 321.4,396.1 322.6,383.2 323.8,394.2 325.0,393.7 326.2,398.8 327.4,408.8 328.5,400.1 329.7,391.8 330.9,392.5 332.1,398.6 333.3,410.6 334.5,386.7 335.6,385.8 336.8,383.7 338.0,383.5 339.2,397.9 340.4,400.5 341.6,391.2 342.7,383.5 343.9,407.6 345.1,401.0 346.3,401.2 347.5,389.8 348.7,382.9 349.8,397.9 351.0,406.6 352.2,397.6 353.4,400.5 354.6,408.1 355.8,391.4 356.9,397.9 358.1,392.8 359.3,404.4 360.5,390.7 361.7,405.0 362.9,391.9 364.0,407.8 365.2,387.4 366.4,399.5 367.6,410.7 368.8,400.1 370.0,395.1 371.1,405.1 372.3,401.7 373.5,394.8 374.7,402.4 375.9,424.7 377.1,404.6 378.2,392.5 379.4,390.9 380.6,387.7 381.8,396.1 383.0,372.7 384.2,383.7 385.3,390.0 386.5,384.0 387.7,385.3 388.9,394.7 390.1,400.0 391.3,387.2 392.4,394.0 393.6,415.3 394.8,409.4 396.0,393.9 397.2,394.0 398.4,392.3 399.5,389.5 400.7,390.7 401.9,382.3 403.1,399.8 404.3,400.9 405.5,392.8 406.7,387.3 407.8,384.7 409.0,381.9 410.2,395.8 411.4,385.7 412.6,392.0 413.8,405.8 414.9,395.9 416.1,376.0 417.3,419.1 418.5,404.3 419.7,421.4 420.9,409.8 422.0,404.6 423.2,392.9 424.4,374.0 425.6,384.7 426.8,394.4 428.0,420.0 429.1,410.0 430.3,402.2 431.5,395.5 432.7,371.6 433.9,395.7 435.1,401.1 436.2,388.0 437.4,396.6 438.6,405.3 439.8,388.7 441.0,399.9 442.2,381.1 443.3,396.0 444.5,392.9 445.7,397.7 446.9,374.8 448.1,390.4 449.3,407.5 450.4,422.0 451.6,422.7 452.8,400.8 454.0,384.8 455.2,383.2 456.4,379.3 457.5,378.4 458.7,391.1 459.9,391.5 461.1,406.8 462.3,393.9 463.5,392.9 464.6,398.4 465.8,403.8 467.0,407.6 468.2,396.1 469.4,387.5 470.6,397.0 471.7,395.5 472.9,401.6 474.1,399.2 475.3,404.8 476.5,397.4 477.7,398.3 478.8,397.2 480.0,404.7 481.2,409.3 482.4,401.1 483.6,387.6 484.8,384.5 485.9,396.0 487.1,391.3 488.3,390.2 489.5,397.0 490.7,408.8 491.9,401.1 493.0,402.9 494.2,390.2 495.4,389.2 496.6,397.6 497.8,415.0 499.0,397.9 500.1,395.1 501.3,404.9 502.5,394.3 503.7,396.9 504.9,401.6 506.1,406.5 507.2,408.6 508.4,398.2 509.6,377.8 510.8,391.2 512.0,398.6 513.2,404.5 514.3,405.8 515.5,406.0 516.7,404.6 517.9,395.2 519.1,397.4 520.3,395.8 521.4,403.4 522.6,394.8 523.8,395.9 525.0,394.5 526.2,400.0 527.4,402.6 528.5,391.0 529.7,388.4 530.9,366.7 532.1,359.4 533.3,373.0 534.5,393.8 535.6,396.0 536.8,397.1 538.0,405.4 539.2,408.6 540.4,396.6 541.6,390.0 542.7,394.3 543.9,403.5 545.1,395.9 546.3,394.0 547.5,394.8 548.7,395.6 549.8,399.2 551.0,395.7 552.2,392.3 553.4,401.7 554.6,407.6 555.8,399.6 556.9,398.6 558.1,408.5 559.3,402.0 560.5,392.3 561.7,393.5 562.9,395.8 564.0,399.1 565.2,385.6 566.4,379.2 567.6,390.7 568.8,398.7 570.0,398.3 571.1,387.8 572.3,390.5 573.5,393.9 574.7,383.9 575.9,383.0 577.1,390.1 578.2,402.2 579.4,395.1 580.6,391.0 581.8,396.8 583.0,386.0 584.2,379.3 585.3,384.6 586.5,396.6 587.7,396.8 588.9,386.4 590.1,382.3 591.3,380.9 592.4,383.4 593.6,392.3 594.8,400.1 596.0,404.3 597.2,388.0 598.4,379.1 599.5,394.2 600.7,398.8 601.9,393.6 603.1,397.8 604.3,408.9 605.5,410.4 606.6,406.3 607.8,393.6 609.0,399.6 610.2,392.3 611.4,381.6 612.6,379.4 613.7,380.7 614.9,385.0 616.1,398.9 617.3,398.8 618.5,397.3 619.7,389.2 620.8,379.9 622.0,395.5 623.2,394.6 624.4,396.0 625.6,384.8 626.8,383.9 627.9,389.8 629.1,382.5 630.3,387.0 631.5,386.0 632.7,391.4 633.9,398.3 635.0,398.8 636.2,395.8 637.4,392.3 638.6,389.8 639.8,383.1 641.0,394.2 642.1,401.3 643.3,403.5 644.5,405.7 645.7,408.8 646.9,404.1 648.1,394.4 649.2,396.2 650.4,398.3 651.6,394.7 652.8,390.1 654.0,390.4 655.2,392.3 656.3,398.3 657.5,399.5 658.7,400.0 659.9,397.9 661.1,399.3 662.3,397.2 663.4,394.9 664.6,394.3 665.8,394.5 667.0,392.0 668.2,385.2 669.4,391.5 670.5,395.6 671.7,392.5 672.9,396.9 674.1,396.8 675.3,393.6 676.5,403.2 677.6,408.0 678.8,391.0 680.0,385.6 681.2,396.7 682.4,396.7 683.6,394.0 684.7,404.4 685.9,405.5 687.1,405.3 688.3,405.6 689.5,409.8 690.7,401.9 691.8,411.0 693.0,409.2 694.2,409.7 695.4,414.9 696.6,408.6 697.8,407.5 699.0,402.8 700.1,402.5 701.3,399.6 702.5,395.2 703.7,388.7 704.9,388.6 706.1,395.2 707.2,390.2 708.4,382.4 709.6,386.2 710.8,392.2 712.0,391.1 713.2,388.6 714.3,383.5 715.5,384.8 716.7,381.1 717.9,377.1 719.1,390.8 720.3,395.7 721.4,398.1 722.6,394.3 723.8,382.7 725.0,379.0 726.2,378.9 727.4,392.3 728.5,388.7 729.7,375.9 730.9,374.1 732.1,375.2 733.3,376.6 734.5,381.1 735.6,382.6 736.8,381.8 738.0,380.0 739.2,383.5 740.4,381.5 741.6,380.0 742.7,390.8 743.9,391.7 745.1,386.6 746.3,389.0 747.5,386.3 748.7,378.0 749.8,384.1 751.0,388.7 752.2,380.5 753.4,377.1 754.6,392.1 755.8,394.7 756.9,391.6 758.1,389.6 759.3,379.7 760.5,383.9 761.7,390.5 762.9,389.8 764.0,394.4 765.2,394.4 766.4,386.9 767.6,382.1 768.8,396.8 770.0,389.8 771.1,381.9 772.3,381.4 773.5,379.0 774.7,384.8 775.9,389.2 777.1,392.3 778.2,392.2 779.4,385.8 780.6,402.8 781.8,408.3 783.0,394.6 784.2,398.9 785.3,403.4 786.5,395.9 787.7,390.3 788.9,388.3 790.1,386.6 791.3,391.1 792.4,393.6 793.6,389.2 794.8,388.5 796.0,396.6 797.2,401.4 798.4,396.6 799.5,385.7 800.7,385.7 801.9,393.4 803.1,390.4 804.3,384.4 805.5,384.1 806.6,392.4 807.8,390.9 809.0,380.5 810.2,374.3 811.4,381.4 812.6,393.4 813.7,391.2 814.9,391.9 816.1,392.9 817.3,395.2 818.5,394.5 819.7,388.9 820.8,381.1 822.0,384.0 823.2,387.7 824.4,391.4 825.6,395.0 826.8,391.3 827.9,383.9 829.1,381.7 830.3,379.6 831.5,386.5 832.7,393.2 833.9,398.1 835.0,394.3 836.2,396.1 837.4,387.2 838.6,391.4 839.8,394.0 841.0,398.1 842.1,396.8 843.3,394.2 844.5,386.4 845.7,389.6 846.9,399.1 848.1,401.9 849.2,394.9 850.4,394.9 851.6,395.8 852.8,389.9 854.0,390.5 855.2,391.5 856.3,394.4 857.5,395.3 858.7,396.6 859.9,398.4 861.1,390.0 862.3,391.0 863.4,398.6 864.6,391.7 865.8,385.4 867.0,386.5 868.2,385.4 869.4,390.8 870.5,394.1 871.7,399.2 872.9,400.9 874.1,403.2 875.3,398.6 876.5,391.4 877.6,387.7 878.8,386.2 880.0,392.1 881.2,397.0 882.4,393.4 883.6,391.2 884.7,383.1 885.9,381.2 887.1,389.2 888.3,399.8 889.5,399.5 890.7,396.9 891.8,398.2 893.0,393.4 894.2,390.3 895.4,390.1 896.6,394.3 897.8,400.1 898.9,400.3 900.1,394.5 901.3,386.2 902.5,383.6 903.7,386.7 904.9,389.8 906.0,388.9 907.2,387.0 908.4,385.2 909.6,390.0 910.8,397.8 912.0,390.8 913.1,390.9 914.3,394.0 915.5,391.1 916.7,391.1 917.9,395.4 919.1,400.6 920.2,394.1 921.4,390.2 922.6,394.6 923.8,399.3 925.0,391.9 926.2,388.4 927.3,390.0 928.5,390.8 929.7,394.3 930.9,395.0 932.1,391.4 933.3,392.7 934.4,386.9 935.6,376.1 936.8,383.8 938.0,392.8 939.2,399.0 940.4,393.0 941.5,389.7 942.7,394.6 943.9,397.7 945.1,401.8 946.3,394.1 947.5,393.2 948.6,388.2 949.8,385.6 951.0,389.7 952.2,388.0 953.4,390.3 954.6,393.5 955.7,395.4 956.9,394.9 958.1,387.0 959.3,388.4 960.5,394.6 961.7,391.6 962.8,397.0 964.0,398.7 965.2,391.7 966.4,395.0 967.6,389.4 968.8,389.1 969.9,388.1 971.1,387.9 972.3,386.9 973.5,389.1 974.7,389.8 975.9,389.7 977.0,388.7 978.2,391.9 979.4,387.3 980.6,385.5 981.8,390.9 983.0,392.4 984.1,395.5 985.3,395.1 986.5,393.3 987.7,395.9 988.9,397.9 990.1,394.8 991.2,392.5 992.4,391.1 993.6,392.8 994.8,398.3 996.0,390.6 997.2,393.6 998.4,397.9 999.5,395.9 1000.7,391.3 1001.9,390.1 1003.1,394.0 1004.3,396.0 1005.5,400.2 1006.6,395.6 1007.8,394.7 1009.0,394.6 1010.2,388.3 1011.4,383.7 1012.6,388.2 1013.7,393.6 1014.9,389.1 1016.1,393.3 1017.3,395.4 1018.5,395.8 1019.7,392.1 1020.8,390.8 1022.0,392.9 1023.2,394.9 1024.4,395.5 1025.6,394.6 1026.8,391.3 1027.9,395.1 1029.1,395.7 1030.3,396.2 1031.5,397.8 1032.7,398.1 1033.9,400.0 1035.0,393.7 1036.2,391.7 1037.4,392.5 1038.6,389.2 1039.8,394.6 1041.0,392.3 1042.1,392.1 1043.3,396.1 1044.5,394.7 1045.7,390.7 1046.9,392.3 1048.1,391.0 1049.2,387.7 1050.4,393.7 1051.6,401.8 1052.8,398.4 1054.0,392.0 1055.2,395.2 1056.3,401.8 1057.5,403.7 1058.7,393.9 1059.9,389.8 1061.1,400.9 1062.3,404.8 1063.4,396.6 1064.6,397.0 1065.8,397.5 1067.0,398.2 1068.2,398.9 1069.4,393.6 1070.5,390.7 1071.7,393.6 1072.9,395.9 1074.1,392.1 1075.3,393.6 1076.5,394.3 1077.6,397.3 1078.8,392.7 1080.0,389.4 1081.2,388.7 1082.4,392.4 1083.6,393.8 1084.7,395.3 1085.9,390.8 1087.1,388.8 1088.3,389.6 1089.5,396.2 1090.7,399.9 1091.8,396.5 1093.0,396.1 1094.2,396.6 1095.4,391.3 1096.6,388.8 1097.8,389.5 1098.9,388.3 1100.1,392.0 1101.3,397.8 1102.5,397.7 1103.7,394.8 1104.9,389.9 1106.0,388.6 1107.2,390.1 1108.4,390.1 1109.6,395.2 1110.8,392.6 1112.0,386.5 1113.1,387.7 1114.3,390.6 1115.5,401.1 1116.7,403.1 1117.9,397.1 1119.1,387.7 1120.2,385.7 1121.4,394.2 1122.6,398.7 1123.8,399.1 1125.0,396.7 1126.2,391.9 1127.3,390.5 1128.5,384.4 1129.7,387.9 1130.9,393.8 1132.1,392.5 1133.3,391.5 1134.4,388.1 1135.6,388.0 1136.8,391.2 1138.0,388.3 1139.2,388.8 1140.4,391.3 1141.5,390.2 1142.7,383.9 1143.9,393.3 1145.1,393.6 1146.3,388.2 1147.5,391.5 1148.6,394.2 1149.8,393.5 1151.0,397.8 1152.2,396.3 1153.4,398.7 1154.6,398.8 1155.7,401.6 1156.9,397.2 1158.1,391.1 1159.3,394.6 1160.5,396.3 1161.7,389.3 1162.8,392.1 1164.0,389.7 1165.2,396.0 1166.4,398.1 1167.6,389.5 1168.8,392.7 1169.9,390.5 1171.1,390.7 1172.3,398.1 1173.5,408.3 1174.7,396.0 1175.9,393.1 1177.0,395.6 1178.2,399.6 1179.4,395.1 1180.6,392.1 1181.8,394.2 1183.0,393.6 1184.1,396.2 1185.3,395.2 1186.5,393.3 1187.7,392.1 1188.9,388.4 1190.1,388.3 1191.2,389.3 1192.4,390.6 1193.6,394.8 1194.8,397.8 1196.0,389.9 1197.2,386.2 1198.3,392.0 1199.5,395.6 1200.7,393.7 1201.9,389.7 1203.1,393.4 1204.3,398.7 1205.4,397.9 1206.6,398.5 1207.8,398.0 1209.0,400.0 1210.2,397.7 1211.4,388.7 1212.5,390.9 1213.7,401.4 1214.9,401.8 1216.1,398.7 1217.3,399.1 1218.5,400.0 1219.6,395.5 1220.8,399.5 1222.0,393.4 1223.2,391.7 1224.4,396.5 1225.6,398.2 1226.7,395.5 1227.9,397.3 1229.1,405.3 1230.3,402.5 1231.5,382.9 1232.7,395.4 1233.8,398.5 1235.0,400.9 1236.2,400.7 1237.4,395.6 1238.6,386.7 1239.8,394.7 1240.9,390.3 1242.1,391.2 1243.3,393.8 1244.5,395.1 1245.7,394.8 1246.9,389.1 1248.0,391.6 1249.2,395.5 1250.4,396.2 1251.6,396.9 1252.8,400.9 1254.0,399.8 1255.1,398.3 1256.3,393.8 1257.5,395.5 1258.7,403.4 1259.9,398.5 1261.1,394.5 1262.2,401.9 1263.4,401.6 1264.6,394.2 1265.8,404.6 1267.0,411.9 1268.2,415.5 1269.3,403.7 1270.5,398.1 1271.7,395.7 1272.9,393.4 1274.1,393.4 1275.3,397.3 1276.4,398.7 1277.6,397.0 1278.8,396.4 1280.0,396.4 1281.2,398.4 1282.4,398.6 1283.5,387.5 1284.7,407.4 1285.9,394.8 1287.1,392.2 1288.3,396.0 1289.5,394.1 1290.7,393.9 1291.8,394.4 1293.0,394.1 1294.2,396.6 1295.4,394.2 1296.6,398.7 1297.8,408.7 1298.9,398.4 1300.1,390.8 1301.3,389.1 1302.5,397.5 1303.7,396.5 1304.9,395.8 1306.0,397.7 1307.2,392.6" fill="none" stroke="#0000ff" stroke-width="1.3" stroke-linejoin="round"/>
<line x1="531.8" x2="531.8" y1="348.5" y2="432.3" stroke="#000" stroke-width="0.8" stroke-dasharray="2.6,1.3" opacity="0.8"/>
</g>
<rect x="101.5" y="348.5" width="1198.1" height="83.80000000000001" fill="none" stroke="#000" stroke-width="0.9"/>
<text class="s" x="107.25" y="447.20" font-size="10.4" text-anchor="middle">3500</text>
<text class="s" x="166.42" y="447.20" font-size="10.4" text-anchor="middle">3600</text>
<text class="s" x="225.59" y="447.20" font-size="10.4" text-anchor="middle">3700</text>
<text class="s" x="284.76" y="447.20" font-size="10.4" text-anchor="middle">3800</text>
<text class="s" x="343.93" y="447.20" font-size="10.4" text-anchor="middle">3900</text>
<text class="s" x="403.10" y="447.20" font-size="10.4" text-anchor="middle">4000</text>
<text class="s" x="462.27" y="447.20" font-size="10.4" text-anchor="middle">4100</text>
<text class="s" x="521.44" y="447.20" font-size="10.4" text-anchor="middle">4200</text>
<text class="s" x="580.61" y="447.20" font-size="10.4" text-anchor="middle">4300</text>
<text class="s" x="639.78" y="447.20" font-size="10.4" text-anchor="middle">4400</text>
<text class="s" x="698.95" y="447.20" font-size="10.4" text-anchor="middle">4500</text>
<text class="s" x="758.12" y="447.20" font-size="10.4" text-anchor="middle">4600</text>
<text class="s" x="817.29" y="447.20" font-size="10.4" text-anchor="middle">4700</text>
<text class="s" x="876.46" y="447.20" font-size="10.4" text-anchor="middle">4800</text>
<text class="s" x="935.63" y="447.20" font-size="10.4" text-anchor="middle">4900</text>
<text class="s" x="994.80" y="447.20" font-size="10.4" text-anchor="middle">5000</text>
<text class="s" x="1053.97" y="447.20" font-size="10.4" text-anchor="middle">5100</text>
<text class="s" x="1113.14" y="447.20" font-size="10.4" text-anchor="middle">5200</text>
<text class="s" x="1172.31" y="447.20" font-size="10.4" text-anchor="middle">5300</text>
<text class="s" x="1231.48" y="447.20" font-size="10.4" text-anchor="middle">5400</text>
<text class="s" x="1290.65" y="447.20" font-size="10.4" text-anchor="middle">5500</text>
<text class="s" x="94.30" y="421.20" font-size="10.4" text-anchor="end">0.0</text>
<text class="s" x="94.30" y="398.60" font-size="10.4" text-anchor="end">2.5</text>
<text class="s" x="94.30" y="376.00" font-size="10.4" text-anchor="end">5.0</text>
<text class="s" x="94.30" y="353.40" font-size="10.4" text-anchor="end">7.5</text>
<path d="M107.2,432.3v3.6 M166.4,432.3v3.6 M225.6,432.3v3.6 M284.8,432.3v3.6 M343.9,432.3v3.6 M403.1,432.3v3.6 M462.3,432.3v3.6 M521.4,432.3v3.6 M580.6,432.3v3.6 M639.8,432.3v3.6 M699.0,432.3v3.6 M758.1,432.3v3.6 M817.3,432.3v3.6 M876.5,432.3v3.6 M935.6,432.3v3.6 M994.8,432.3v3.6 M1054.0,432.3v3.6 M1113.1,432.3v3.6 M1172.3,432.3v3.6 M1231.5,432.3v3.6 M1290.7,432.3v3.6 M101.5,417.3h-3.6 M101.5,394.7h-3.6 M101.5,372.1h-3.6 M101.5,349.5h-3.6" stroke="#000" stroke-width="0.9" fill="none"/>
<text class="s" x="107.6" y="346.6" font-size="9.6">e<tspan font-size="6.7" dy="-3.7">−17</tspan><tspan dy="3.7">x2</tspan><tspan font-style="italic">Å</tspan></text>
<rect x="479.9" y="450.3" width="17.3" height="6.1" fill="#ff0000"/>
<text class="s" x="503.5" y="456.6" font-size="8.6">Ly<tspan font-style="italic">α</tspan></text>
<rect x="533.4" y="450.3" width="17.3" height="6.1" fill="#008000"/>
<text class="s" x="557.10" y="456.60" font-size="8.6">OII</text>
<rect x="586.7" y="450.3" width="17.3" height="6.1" fill="#8a2be2"/>
<text class="s" x="609.70" y="456.60" font-size="8.6">CIV</text>
<rect x="641.5" y="450.3" width="17.3" height="6.1" fill="#800080"/>
<text class="s" x="664.50" y="456.60" font-size="8.6">CIII</text>
<rect x="693.5" y="450.3" width="17.3" height="6.1" fill="#ff00ff"/>
<text class="s" x="716.50" y="456.60" font-size="8.6">MgII</text>
<rect x="748.7" y="450.3" width="17.3" height="6.1" fill="#ffa500"/>
<text class="s" x="772.30" y="456.60" font-size="8.6">HeII</text>
<rect x="803.5" y="450.3" width="17.3" height="6.1" fill="#87ceeb"/>
<text class="s" x="827.20" y="456.60" font-size="8.6">(K)CaII</text>
<rect x="869.3" y="450.3" width="17.3" height="6.1" fill="#87ceeb"/>
<text class="s" x="893.00" y="456.60" font-size="8.6">(H)CaII</text>
<clipPath id="cg"><rect x="1048.0" y="60.8" width="251.20000000000005" height="150.2"/></clipPath>
<rect x="1048.0" y="60.8" width="251.20000000000005" height="150.2" fill="#fff"/>
<g clip-path="url(#cg)">
<line x1="1048.0" x2="1299.2" y1="199.4" y2="199.4" stroke="#000" stroke-opacity="0.6" stroke-width="0.9"/>
<path d="M1059.4,140.0V185.0 M1064.1,174.6V217.8 M1068.7,129.2V167.0 M1073.4,113.0V149.0 M1078.0,118.4V154.4 M1082.7,167.9V203.9 M1087.3,144.5V178.7 M1091.9,176.4V212.4 M1096.6,163.8V196.2 M1101.2,135.1V167.5 M1105.9,140.0V172.4 M1110.5,133.2V165.6 M1115.2,166.1V198.5 M1119.8,160.7V193.1 M1124.5,168.8V199.4 M1129.1,156.2V186.8 M1133.8,168.3V198.9 M1138.4,161.1V189.9 M1143.1,161.6V190.4 M1147.7,149.0V179.6 M1152.4,135.1V165.7 M1157.0,162.1V194.5 M1161.7,153.5V184.1 M1166.3,122.0V152.6 M1171.0,80.6V113.0 M1175.6,68.0V100.4 M1180.3,97.7V128.3 M1184.9,135.5V166.1 M1189.6,168.8V199.4 M1194.2,175.5V204.3 M1198.9,149.0V177.8 M1203.5,135.9V164.7 M1208.2,147.2V176.0 M1212.8,154.0V182.8 M1217.5,123.8V152.6 M1222.1,168.8V199.4 M1226.8,145.4V174.2 M1231.4,146.3V175.1 M1236.1,147.6V178.2 M1240.7,115.3V147.7 M1245.4,148.5V180.9 M1250.0,167.9V200.3 M1254.7,137.8V168.4 M1259.3,135.5V166.1 M1264.0,157.1V187.7 M1268.6,141.8V172.4 M1273.3,164.3V194.9 M1277.9,150.3V179.1 M1282.6,152.6V183.2 M1287.2,147.6V178.2" stroke="#1f77b4" stroke-width="1.5" fill="none"/>
<g fill="#1f77b4"><circle cx="1059.4" cy="162.5" r="1.55"/><circle cx="1064.1" cy="196.2" r="1.55"/><circle cx="1068.7" cy="148.1" r="1.55"/><circle cx="1073.4" cy="131.0" r="1.55"/><circle cx="1078.0" cy="136.4" r="1.55"/><circle cx="1082.7" cy="185.9" r="1.55"/><circle cx="1087.3" cy="161.6" r="1.55"/><circle cx="1091.9" cy="194.4" r="1.55"/><circle cx="1096.6" cy="180.0" r="1.55"/><circle cx="1101.2" cy="151.3" r="1.55"/><circle cx="1105.9" cy="156.2" r="1.55"/><circle cx="1110.5" cy="149.4" r="1.55"/><circle cx="1115.2" cy="182.3" r="1.55"/><circle cx="1119.8" cy="176.9" r="1.55"/><circle cx="1124.5" cy="184.1" r="1.55"/><circle cx="1129.1" cy="171.5" r="1.55"/><circle cx="1133.8" cy="183.6" r="1.55"/><circle cx="1138.4" cy="175.5" r="1.55"/><circle cx="1143.1" cy="176.0" r="1.55"/><circle cx="1147.7" cy="164.3" r="1.55"/><circle cx="1152.4" cy="150.4" r="1.55"/><circle cx="1157.0" cy="178.3" r="1.55"/><circle cx="1161.7" cy="168.8" r="1.55"/><circle cx="1166.3" cy="137.3" r="1.55"/><circle cx="1171.0" cy="96.8" r="1.55"/><circle cx="1175.6" cy="84.2" r="1.55"/><circle cx="1180.3" cy="113.0" r="1.55"/><circle cx="1184.9" cy="150.8" r="1.55"/><circle cx="1189.6" cy="184.1" r="1.55"/><circle cx="1194.2" cy="189.9" r="1.55"/><circle cx="1198.9" cy="163.4" r="1.55"/><circle cx="1203.5" cy="150.3" r="1.55"/><circle cx="1208.2" cy="161.6" r="1.55"/><circle cx="1212.8" cy="168.4" r="1.55"/><circle cx="1217.5" cy="138.2" r="1.55"/><circle cx="1222.1" cy="184.1" r="1.55"/><circle cx="1226.8" cy="159.8" r="1.55"/><circle cx="1231.4" cy="160.7" r="1.55"/><circle cx="1236.1" cy="162.9" r="1.55"/><circle cx="1240.7" cy="131.5" r="1.55"/><circle cx="1245.4" cy="164.7" r="1.55"/><circle cx="1250.0" cy="184.1" r="1.55"/><circle cx="1254.7" cy="153.1" r="1.55"/><circle cx="1259.3" cy="150.8" r="1.55"/><circle cx="1264.0" cy="172.4" r="1.55"/><circle cx="1268.6" cy="157.1" r="1.55"/><circle cx="1273.3" cy="179.6" r="1.55"/><circle cx="1277.9" cy="164.7" r="1.55"/><circle cx="1282.6" cy="167.9" r="1.55"/><circle cx="1287.2" cy="162.9" r="1.55"/></g>
<polyline points="1068.7,169.2 1069.9,169.2 1071.0,169.2 1072.2,169.2 1073.4,169.2 1074.5,169.2 1075.7,169.2 1076.8,169.2 1078.0,169.2 1079.2,169.2 1080.3,169.2 1081.5,169.2 1082.7,169.2 1083.8,169.2 1085.0,169.2 1086.1,169.2 1087.3,169.2 1088.5,169.2 1089.6,169.2 1090.8,169.2 1091.9,169.2 1093.1,169.2 1094.3,169.2 1095.4,169.2 1096.6,169.2 1097.8,169.2 1098.9,169.2 1100.1,169.2 1101.2,169.2 1102.4,169.2 1103.6,169.2 1104.7,169.2 1105.9,169.2 1107.1,169.2 1108.2,169.2 1109.4,169.2 1110.5,169.2 1111.7,169.2 1112.9,169.2 1114.0,169.2 1115.2,169.2 1116.4,169.2 1117.5,169.2 1118.7,169.2 1119.8,169.2 1121.0,169.2 1122.2,169.2 1123.3,169.2 1124.5,169.2 1125.7,169.2 1126.8,169.2 1128.0,169.2 1129.1,169.2 1130.3,169.2 1131.5,169.2 1132.6,169.2 1133.8,169.2 1135.0,169.2 1136.1,169.2 1137.3,169.2 1138.4,169.2 1139.6,169.2 1140.8,169.2 1141.9,169.2 1143.1,169.2 1144.3,169.2 1145.4,169.2 1146.6,169.2 1147.7,169.2 1148.9,169.2 1150.1,169.2 1151.2,169.2 1152.4,169.1 1153.5,169.1 1154.7,169.1 1155.9,169.0 1157.0,168.8 1158.2,168.5 1159.4,167.8 1160.5,166.7 1161.7,164.9 1162.8,162.2 1164.0,158.2 1165.2,152.7 1166.3,145.5 1167.5,136.8 1168.7,126.9 1169.8,116.5 1171.0,106.6 1172.1,98.1 1173.3,92.2 1174.5,89.7 1175.6,90.8 1176.8,95.4 1178.0,102.9 1179.1,112.4 1180.3,122.8 1181.4,133.0 1182.6,142.2 1183.8,150.0 1184.9,156.2 1186.1,160.8 1187.3,164.0 1188.4,166.1 1189.6,167.4 1190.7,168.2 1191.9,168.7 1193.1,168.9 1194.2,169.1 1195.4,169.1 1196.6,169.1 1197.7,169.2 1198.9,169.2 1200.0,169.2 1201.2,169.2 1202.4,169.2 1203.5,169.2 1204.7,169.2 1205.8,169.2 1207.0,169.2 1208.2,169.2 1209.3,169.2 1210.5,169.2 1211.7,169.2 1212.8,169.2 1214.0,169.2 1215.1,169.2 1216.3,169.2 1217.5,169.2 1218.6,169.2 1219.8,169.2 1221.0,169.2 1222.1,169.2 1223.3,169.2 1224.4,169.2 1225.6,169.2 1226.8,169.2 1227.9,169.2 1229.1,169.2 1230.3,169.2 1231.4,169.2 1232.6,169.2 1233.7,169.2 1234.9,169.2 1236.1,169.2 1237.2,169.2 1238.4,169.2 1239.6,169.2 1240.7,169.2 1241.9,169.2 1243.0,169.2 1244.2,169.2 1245.4,169.2 1246.5,169.2 1247.7,169.2 1248.9,169.2 1250.0,169.2 1251.2,169.2 1252.3,169.2 1253.5,169.2 1254.7,169.2 1255.8,169.2 1257.0,169.2 1258.2,169.2 1259.3,169.2 1260.5,169.2 1261.6,169.2 1262.8,169.2 1264.0,169.2 1265.1,169.2 1266.3,169.2 1267.4,169.2 1268.6,169.2 1269.8,169.2 1270.9,169.2 1272.1,169.2 1273.3,169.2 1274.4,169.2 1275.6,169.2 1276.7,169.2 1277.9,169.2 1279.1,169.2 1280.2,169.2 1281.4,169.2 1282.6,169.2" fill="none" stroke="#000" stroke-opacity="0.78" stroke-width="1.9" stroke-linejoin="round"/>
</g>
<rect x="1048.0" y="60.8" width="251.20000000000005" height="150.2" fill="none" stroke="#000" stroke-width="0.8"/>
<text class="s" x="1087.30" y="223.80" font-size="8.3" text-anchor="middle">4180</text>
<text class="s" x="1133.79" y="223.80" font-size="8.3" text-anchor="middle">4200</text>
<text class="s" x="1180.28" y="223.80" font-size="8.3" text-anchor="middle">4220</text>
<text class="s" x="1226.77" y="223.80" font-size="8.3" text-anchor="middle">4240</text>
<text class="s" x="1273.26" y="223.80" font-size="8.3" text-anchor="middle">4260</text>
<text class="s" x="1041.40" y="202.50" font-size="8.3" text-anchor="end">0</text>
<text class="s" x="1041.40" y="166.50" font-size="8.3" text-anchor="end">2</text>
<text class="s" x="1041.40" y="130.50" font-size="8.3" text-anchor="end">4</text>
<text class="s" x="1041.40" y="94.50" font-size="8.3" text-anchor="end">6</text>
<path d="M1087.3,211.0v3.5 M1133.8,211.0v3.5 M1180.3,211.0v3.5 M1226.8,211.0v3.5 M1273.3,211.0v3.5 M1048.0,199.4h-3.5 M1048.0,163.4h-3.5 M1048.0,127.4h-3.5 M1048.0,91.4h-3.5" stroke="#000" stroke-width="0.8" fill="none"/>
<text class="s" x="1050.4" y="72" font-size="8.3">e<tspan font-size="5.8" dy="-3.2">−17</tspan><tspan dy="3.2">x2</tspan><tspan font-style="italic">Å</tspan></text>
<text class="s" x="515.00" y="42.00" font-size="7.5" text-anchor="middle">2D Spec</text>
<text class="s" x="608.40" y="42.00" font-size="7.5" text-anchor="middle">Pixel Flat</text>
<text class="s" x="700.60" y="42.00" font-size="7.5" text-anchor="middle">Smoothed</text>
<rect x="466.3" y="46.2" width="282.8" height="39.2" fill="#fff"/>
<clipPath id="cr4a"><rect x="471.7" y="48.3" width="87.0" height="35.6"/></clipPath>
<clipPath id="cr4b"><rect x="657.3" y="48.3" width="87.2" height="35.6"/></clipPath>
<g clip-path="url(#cr4a)">
<rect x="471.7" y="48.3" width="87.0" height="35.6" filter="url(#n2d4)"/>
<rect x="471.7" y="48.3" width="87.0" height="35.6" fill="#fff" opacity="0.22"/>
<ellipse cx="516.7" cy="67.3" rx="6" ry="2.6" fill="#000" opacity="0.28" filter="url(#b1)"/>
<rect x="471.7" y="64.3" width="87.0" height="6" fill="#000" opacity="0.16" filter="url(#b1)"/>
<rect x="471.7" y="75.4" width="87.0" height="8.5" fill="url(#gb)" opacity="1.0"/>
<ellipse cx="516.7" cy="79.2" rx="8" ry="4.2" fill="#000" opacity="0.70" filter="url(#b1)"/>
</g>
<g clip-path="url(#cr4b)">
<rect x="657.3" y="48.3" width="87.2" height="35.6" filter="url(#nsm4)"/>
<rect x="657.3" y="48.3" width="87.2" height="35.6" fill="url(#gv)"/>
<path d="M653.3,87.9 L653.3,74.4 L671.3,75.6 L679.3,76.9 L693.8,74.9 C698.8,67.3 706.8,67.3 711.8,75.2 L723.3,76.6 L735.3,75.0 L748.5,74.7 L748.5,87.9 Z" fill="#000" opacity="1.00" filter="url(#b1)"/>
<ellipse cx="702.8" cy="66.3" rx="3.5" ry="6" fill="#000" opacity="0.4" filter="url(#b2)"/>
<ellipse cx="702.8" cy="70.4" rx="2.4" ry="8" fill="#000" opacity="0.8" filter="url(#b1)"/>
</g>
<rect x="467.5" y="47.4" width="280.2" height="37.4" fill="none" stroke="#000" stroke-width="2.2"/>
<text class="s" x="749.60" y="61.00" font-size="7.5">Weighted</text>
<text class="s" x="749.60" y="69.90" font-size="7.5">Sum</text>
<clipPath id="cr0a"><rect x="470.3" y="96.4" width="90.0" height="35.6"/></clipPath>
<clipPath id="cr0b"><rect x="656.5" y="96.4" width="89.5" height="35.6"/></clipPath>
<g clip-path="url(#cr0a)">
<rect x="470.3" y="96.4" width="90.0" height="35.6" filter="url(#n2d0)"/>
<ellipse cx="515.3" cy="115.4" rx="6" ry="2.6" fill="#000" opacity="0.30" filter="url(#b1)"/>
<rect x="470.3" y="112.4" width="90.0" height="6" fill="#000" opacity="0.16" filter="url(#b1)"/>
<rect x="470.3" y="124.5" width="90.0" height="7.5" fill="url(#gb)" opacity="1.0"/>
<ellipse cx="515.3" cy="127.9" rx="8" ry="3.8" fill="#000" opacity="0.70" filter="url(#b1)"/>
</g>
<rect x="564.2" y="96.4" width="89.7" height="35.6" filter="url(#npf)"/>
<rect x="631.8" y="98.4" width="1.7" height="1.7" fill="#111"/>
<g clip-path="url(#cr0b)">
<rect x="656.5" y="96.4" width="89.5" height="35.6" filter="url(#nsm0)"/>
<rect x="656.5" y="96.4" width="89.5" height="35.6" fill="url(#gv)"/>
<path d="M652.5,136.0 L652.5,123.5 L670.5,124.7 L678.5,126.0 L693.0,124.0 C698.0,116.0 706.0,116.0 711.0,124.3 L722.5,125.7 L734.5,124.1 L750.0,123.8 L750.0,136.0 Z" fill="#000" opacity="1.00" filter="url(#b1)"/>
<ellipse cx="702.0" cy="114.4" rx="3.5" ry="6" fill="#000" opacity="0.4" filter="url(#b2)"/>
</g>
<rect x="467.5" y="95.5" width="280.2" height="37.4" fill="none" stroke="#0000ff" stroke-width="2.2"/>
<text class="s" x="446.30" y="106.20" font-size="7.5">0.25</text>
<text class="s" x="446.30" y="114.70" font-size="7.5">0.92</text>
<text class="s" x="446.30" y="123.20" font-size="7.5">051</text>
<text class="s" x="750.80" y="99.80" font-size="5.5">0.30"</text>
<text class="s" x="750.80" y="107.20" font-size="5.5">(364, 569)</text>
<text class="s" x="750.80" y="115.30" font-size="5.5">20180411</text>
<text class="s" x="750.80" y="121.80" font-size="5.5">v015_03</text>
<text class="s" x="750.80" y="129.00" font-size="5.5">305_LU_062</text>
<clipPath id="cr1a"><rect x="470.3" y="136.0" width="90.0" height="35.6"/></clipPath>
<clipPath id="cr1b"><rect x="656.5" y="136.0" width="89.5" height="35.6"/></clipPath>
<g clip-path="url(#cr1a)">
<rect x="470.3" y="136.0" width="90.0" height="35.6" filter="url(#n2d1)"/>
<ellipse cx="515.3" cy="155.0" rx="6" ry="2.6" fill="#000" opacity="0.15" filter="url(#b1)"/>
<rect x="470.3" y="152.0" width="90.0" height="6" fill="#000" opacity="0.16" filter="url(#b1)"/>
<rect x="470.3" y="164.6" width="90.0" height="7.0" fill="url(#gb)" opacity="1.0"/>
<ellipse cx="515.3" cy="167.8" rx="8" ry="3.5" fill="#000" opacity="0.70" filter="url(#b1)"/>
</g>
<rect x="564.2" y="136.0" width="89.7" height="35.6" filter="url(#npf)"/>
<g clip-path="url(#cr1b)">
<rect x="656.5" y="136.0" width="89.5" height="35.6" filter="url(#nsm1)"/>
<rect x="656.5" y="136.0" width="89.5" height="35.6" fill="url(#gv)"/>
<path d="M652.5,175.6 L652.5,163.6 L670.5,164.8 L678.5,166.1 L693.0,164.1 C698.0,159.8 706.0,159.8 711.0,164.4 L722.5,165.8 L734.5,164.2 L750.0,163.9 L750.0,175.6 Z" fill="#000" opacity="1.00" filter="url(#b1)"/>
</g>
<rect x="467.5" y="135.1" width="280.2" height="37.4" fill="none" stroke="#00ff00" stroke-width="2.2"/>
<text class="s" x="446.30" y="145.80" font-size="7.5">0.13</text>
<text class="s" x="446.30" y="154.30" font-size="7.5">2.52</text>
<text class="s" x="446.30" y="162.80" font-size="7.5">071</text>
<text class="s" x="750.80" y="139.40" font-size="5.5">1.21"</text>
<text class="s" x="750.80" y="146.80" font-size="5.5">(363, 394)</text>
<text class="s" x="750.80" y="154.90" font-size="5.5">20180411</text>
<text class="s" x="750.80" y="161.40" font-size="5.5">v015_01</text>
<text class="s" x="750.80" y="168.60" font-size="5.5">305_LU_042</text>
<clipPath id="cr2a"><rect x="470.3" y="175.6" width="90.0" height="35.6"/></clipPath>
<clipPath id="cr2b"><rect x="656.5" y="175.6" width="89.5" height="35.6"/></clipPath>
<g clip-path="url(#cr2a)">
<rect x="470.3" y="175.6" width="90.0" height="35.6" filter="url(#n2d2)"/>
<ellipse cx="515.3" cy="194.6" rx="6" ry="2.6" fill="#000" opacity="0.18" filter="url(#b1)"/>
<rect x="470.3" y="191.6" width="90.0" height="6" fill="#000" opacity="0.16" filter="url(#b1)"/>
<rect x="470.3" y="206.2" width="90.0" height="5.0" fill="url(#gb)" opacity="0.55"/>
<ellipse cx="515.3" cy="208.5" rx="8" ry="2.5" fill="#000" opacity="0.39" filter="url(#b1)"/>
</g>
<rect x="564.2" y="175.6" width="89.7" height="35.6" filter="url(#npf)"/>
<g clip-path="url(#cr2b)">
<rect x="656.5" y="175.6" width="89.5" height="35.6" filter="url(#nsm2)"/>
<rect x="656.5" y="175.6" width="89.5" height="35.6" fill="url(#gv)"/>
<path d="M652.5,215.20000000000002 L652.5,205.2 L670.5,206.4 L678.5,207.7 L693.0,205.7 C698.0,200.7 706.0,200.7 711.0,206.0 L722.5,207.4 L734.5,205.8 L750.0,205.5 L750.0,215.20000000000002 Z" fill="#000" opacity="0.58" filter="url(#b1)"/>
</g>
<rect x="467.5" y="174.7" width="280.2" height="37.4" fill="none" stroke="#ffa500" stroke-width="2.2"/>
<text class="s" x="446.30" y="185.40" font-size="7.5">0.12</text>
<text class="s" x="446.30" y="193.90" font-size="7.5">1.95</text>
<text class="s" x="446.30" y="202.40" font-size="7.5">070</text>
<text class="s" x="750.80" y="179.00" font-size="5.5">1.48"</text>
<text class="s" x="750.80" y="186.40" font-size="5.5">(363, 403)</text>
<text class="s" x="750.80" y="194.50" font-size="5.5">20180411</text>
<text class="s" x="750.80" y="201.00" font-size="5.5">v015_02</text>
<text class="s" x="750.80" y="208.20" font-size="5.5">305_LU_043</text>
<clipPath id="cr3a"><rect x="470.3" y="215.2" width="90.0" height="35.6"/></clipPath>
<clipPath id="cr3b"><rect x="656.5" y="215.2" width="89.5" height="35.6"/></clipPath>
<g clip-path="url(#cr3a)">
<rect x="470.3" y="215.2" width="90.0" height="35.6" filter="url(#n2d3)"/>
<ellipse cx="515.3" cy="234.2" rx="6" ry="2.6" fill="#000" opacity="0.27" filter="url(#b1)"/>
<rect x="470.3" y="231.2" width="90.0" height="6" fill="#000" opacity="0.16" filter="url(#b1)"/>
<rect x="470.3" y="245.8" width="90.0" height="5.0" fill="url(#gb)" opacity="0.8"/>
<ellipse cx="515.3" cy="248.1" rx="8" ry="2.5" fill="#000" opacity="0.56" filter="url(#b1)"/>
</g>
<rect x="564.2" y="215.2" width="89.7" height="35.6" filter="url(#npf)"/>
<rect x="631.8" y="217.2" width="1.7" height="1.7" fill="#111"/>
<g clip-path="url(#cr3b)">
<rect x="656.5" y="215.2" width="89.5" height="35.6" filter="url(#nsm3)"/>
<rect x="656.5" y="215.2" width="89.5" height="35.6" fill="url(#gv)"/>
<path d="M652.5,254.8 L652.5,244.8 L670.5,246.0 L678.5,247.3 L693.0,245.3 C698.0,238.1 706.0,238.1 711.0,245.6 L722.5,247.0 L734.5,245.4 L750.0,245.1 L750.0,254.8 Z" fill="#000" opacity="0.84" filter="url(#b1)"/>
</g>
<rect x="467.5" y="214.3" width="280.2" height="37.4" fill="none" stroke="#ff0000" stroke-width="2.2"/>
<text class="s" x="446.30" y="225.00" font-size="7.5">0.09</text>
<text class="s" x="446.30" y="233.50" font-size="7.5">1.73</text>
<text class="s" x="446.30" y="242.00" font-size="7.5">051</text>
<text class="s" x="750.80" y="218.60" font-size="5.5">1.66"</text>
<text class="s" x="750.80" y="226.00" font-size="5.5">(364, 569)</text>
<text class="s" x="750.80" y="234.10" font-size="5.5">20180411</text>
<text class="s" x="750.80" y="240.60" font-size="5.5">v015_01</text>
<text class="s" x="750.80" y="247.80" font-size="5.5">305_LU_062</text>
<defs>
<filter id="nsky" x="0" y="0" width="100%" height="100%" color-interpolation-filters="sRGB"><feTurbulence type="fractalNoise" baseFrequency="0.42 0.38" numOctaves="2" seed="12"/><feColorMatrix type="matrix" values="1.7 1.7 0 0 -1.2  1.7 1.7 0 0 -1.2  1.7 1.7 0 0 -1.2  0 0 0 0 1" result="n"/><feComposite in="SourceGraphic" in2="n" operator="arithmetic" k1="0" k2="1" k3="0.22" k4="-0.11"/></filter>
<filter id="ncl" x="0" y="0" width="100%" height="100%" color-interpolation-filters="sRGB"><feTurbulence type="fractalNoise" baseFrequency="0.42 0.42" numOctaves="2" seed="27"/><feColorMatrix type="matrix" values="1.8 1.8 0 0 -1.3  1.8 1.8 0 0 -1.3  1.8 1.8 0 0 -1.3  0 0 0 0 1" result="n"/><feComposite in="SourceGraphic" in2="n" operator="arithmetic" k1="0" k2="1" k3="0.4" k4="-0.2"/></filter>
<filter id="b1s" x="-20%" y="-60%" width="140%" height="220%"><feGaussianBlur stdDeviation="0 1.5"/></filter>
</defs>
<clipPath id="csk"><rect x="832.6" y="65.7" width="65.3" height="166.7"/></clipPath>
<g clip-path="url(#csk)"><g filter="url(#nsky)">
<rect x="830.6" y="63.7" width="69.3" height="170.7" fill="#f6f6f6"/>
<rect x="828.6" y="71.5" width="73.3" height="7.2" fill="#5a5a5a" filter="url(#b1s)" opacity="0.85"/>
<rect x="828.6" y="83.9" width="73.3" height="7.2" fill="#5a5a5a" filter="url(#b1s)" opacity="0.85"/>
<rect x="828.6" y="96.3" width="73.3" height="7.2" fill="#5a5a5a" filter="url(#b1s)" opacity="0.85"/>
<rect x="828.6" y="108.7" width="73.3" height="7.2" fill="#5a5a5a" filter="url(#b1s)" opacity="0.85"/>
<rect x="828.6" y="121.1" width="73.3" height="7.2" fill="#5a5a5a" filter="url(#b1s)" opacity="0.85"/>
<rect x="828.6" y="133.5" width="73.3" height="7.2" fill="#5a5a5a" filter="url(#b1s)" opacity="0.85"/>
<rect x="828.6" y="145.9" width="73.3" height="7.2" fill="#5a5a5a" filter="url(#b1s)" opacity="0.85"/>
<rect x="828.6" y="158.3" width="73.3" height="7.2" fill="#262626" filter="url(#b1s)" opacity="0.95"/>
<rect x="828.6" y="170.7" width="73.3" height="7.2" fill="#262626" filter="url(#b1s)" opacity="0.95"/>
<rect x="828.6" y="183.1" width="73.3" height="7.2" fill="#5a5a5a" filter="url(#b1s)" opacity="0.85"/>
<rect x="828.6" y="195.5" width="73.3" height="7.2" fill="#5a5a5a" filter="url(#b1s)" opacity="0.85"/>
<rect x="828.6" y="207.9" width="73.3" height="7.2" fill="#5a5a5a" filter="url(#b1s)" opacity="0.85"/>
<rect x="828.6" y="220.3" width="73.3" height="7.2" fill="#5a5a5a" filter="url(#b1s)" opacity="0.85"/>
</g>
<ellipse cx="864.3" cy="161.9" rx="2.7" ry="2.7" fill="#000" opacity="0.85" filter="url(#b1)"/>
<ellipse cx="864.3" cy="174.3" rx="2.7" ry="2.7" fill="#000" opacity="0.85" filter="url(#b1)"/>
</g>
<rect x="831.5" y="64.6" width="67.5" height="169" fill="none" stroke="#0000ff" stroke-width="2.3"/>
<text class="s" x="865.20" y="47.60" font-size="9.7" text-anchor="middle">With Sky</text>
<text class="s" x="865.20" y="58.60" font-size="9.7" text-anchor="middle">x, y: 364, 569</text>
<clipPath id="ccl"><rect x="933.5" y="65.7" width="65.3" height="166.7"/></clipPath>
<g clip-path="url(#ccl)"><g filter="url(#ncl)">
<rect x="931.5" y="63.7" width="69.3" height="170.7" fill="#a8a8a8"/>
<rect x="929.5" y="158.8" width="73.3" height="6.2" fill="#3a3a3a" filter="url(#b1)" opacity="0.9"/>
<rect x="929.5" y="171.2" width="73.3" height="6.2" fill="#3a3a3a" filter="url(#b1)" opacity="0.9"/>
<rect x="929.5" y="183" width="73.3" height="6" fill="#555" filter="url(#b2)" opacity="0.35"/>
<rect x="929.5" y="149" width="73.3" height="5" fill="#555" filter="url(#b2)" opacity="0.25"/>
</g>
<ellipse cx="965.3" cy="161.9" rx="3.3" ry="3.1" fill="#000" opacity="0.85" filter="url(#b1)"/>
<ellipse cx="965.3" cy="174.3" rx="3.3" ry="3.1" fill="#000" opacity="0.85" filter="url(#b1)"/>
</g>
<rect x="932.3" y="64.6" width="67.6" height="169" fill="none" stroke="#0000ff" stroke-width="2.3"/>
<text class="s" x="966.20" y="47.60" font-size="9.7" text-anchor="middle">Clean Image</text>
<text class="s" x="966.20" y="58.60" font-size="9.7" text-anchor="middle">x, y: 364, 569</text>
<defs>
<filter id="nbg" x="0" y="0" width="100%" height="100%" color-interpolation-filters="sRGB"><feTurbulence type="fractalNoise" baseFrequency="0.28 0.28" numOctaves="2" seed="4"/><feColorMatrix type="matrix" values="0.27 0.27 0 0 0.59  0.27 0.27 0 0 0.59  0.27 0.27 0 0 0.59  0 0 0 0 1"/></filter>
</defs>
<clipPath id="cp0"><rect x="70.0" y="532.7" width="148.3" height="147.7"/></clipPath>
<g clip-path="url(#cp0)">
<rect x="70.0" y="532.7" width="148.3" height="147.7" filter="url(#nbg)"/>
<ellipse cx="190.4" cy="575.6" rx="31.8" ry="53.0" transform="rotate(14.9 190.4 575.6)" fill="#000" opacity="0.45" filter="url(#b5)"/>
<ellipse cx="190.4" cy="575.6" rx="28.5" ry="50.2" transform="rotate(14.9 190.4 575.6)" fill="#000" filter="url(#b3)"/>
<ellipse cx="200.3" cy="556.0" rx="30.2" ry="40.8" fill="#000" filter="url(#b3)"/>
<ellipse cx="209.3" cy="578.1" rx="22.0" ry="29.4" fill="#000" filter="url(#b3)"/>
</g>
<rect x="95.1" y="557.7" width="97.9" height="97.9" fill="none" stroke="#ff0000" stroke-width="1.25"/>
<text class="s" x="144.05" y="545.56" font-size="10.4" text-anchor="middle" fill="#ff0000">N</text>
<text class="s" x="80.11" y="610.50" font-size="10.4" text-anchor="middle" fill="#ff0000">E</text>
<g clip-path="url(#cp0)" fill="none" stroke="#6c6c6c" stroke-opacity="0.62" stroke-width="1.2"><circle cx="125.3" cy="566.0" r="12.2"/><circle cx="149.9" cy="571.4" r="12.2"/><circle cx="174.5" cy="572.0" r="12.2"/><circle cx="111.4" cy="586.4" r="12.2"/><circle cx="160.8" cy="594.4" r="12.2"/><circle cx="182.7" cy="595.2" r="12.2"/><circle cx="97.1" cy="604.5" r="12.2"/><circle cx="169.2" cy="612.0" r="12.2"/><circle cx="191.8" cy="616.2" r="12.2"/><circle cx="106.2" cy="627.2" r="12.2"/><circle cx="153.8" cy="633.0" r="12.2"/><circle cx="178.0" cy="637.1" r="12.2"/><circle cx="114.7" cy="649.3" r="12.2"/><circle cx="139.0" cy="653.1" r="12.2"/><circle cx="163.8" cy="655.4" r="12.2"/></g>
<circle cx="130.3" cy="630.1" r="12.2" fill="none" stroke="#ff0000" stroke-width="1.4"/>
<circle cx="120.2" cy="607.6" r="12.2" fill="none" stroke="#ffa500" stroke-width="1.4"/>
<circle cx="136.1" cy="588.5" r="12.2" fill="none" stroke="#00ff00" stroke-width="1.4"/>
<circle cx="144.1" cy="611.7" r="12.2" fill="none" stroke="#0000ff" stroke-width="1.4"/>
<path d="M140.9,606.6h6.4M144.1,603.4v6.4" stroke="#ff0000" stroke-width="1.1" fill="none"/>
<rect x="70.0" y="532.7" width="148.3" height="147.7" fill="none" stroke="#000" stroke-width="0.9"/>
<text class="s" x="78.81" y="695.40" font-size="10.6" text-anchor="middle">−4</text>
<text class="s" x="63.80" y="675.84" font-size="10.6" text-anchor="end">−4</text>
<text class="s" x="111.43" y="695.40" font-size="10.6" text-anchor="middle">−2</text>
<text class="s" x="63.80" y="643.22" font-size="10.6" text-anchor="end">−2</text>
<text class="s" x="144.05" y="695.40" font-size="10.6" text-anchor="middle">0</text>
<text class="s" x="63.80" y="610.60" font-size="10.6" text-anchor="end">0</text>
<text class="s" x="176.67" y="695.40" font-size="10.6" text-anchor="middle">2</text>
<text class="s" x="63.80" y="577.98" font-size="10.6" text-anchor="end">2</text>
<text class="s" x="209.29" y="695.40" font-size="10.6" text-anchor="middle">4</text>
<text class="s" x="63.80" y="545.36" font-size="10.6" text-anchor="end">4</text>
<path d="M78.8,680.4v3.6 M70.0,671.8h-3.6 M111.4,680.4v3.6 M70.0,639.2h-3.6 M144.1,680.4v3.6 M70.0,606.6h-3.6 M176.7,680.4v3.6 M70.0,574.0h-3.6 M209.3,680.4v3.6 M70.0,541.4h-3.6" stroke="#000" stroke-width="0.9" fill="none"/>
<text class="s" x="144.05" y="526.00" font-size="12.95" text-anchor="middle">Fiber Positions</text>
<clipPath id="cp1"><rect x="255.3" y="532.7" width="148.3" height="147.7"/></clipPath>
<g clip-path="url(#cp1)">
<rect x="255.3" y="532.7" width="148.3" height="147.7" fill="#39568b"/>
<ellipse cx="340.8" cy="632.7" rx="14.7" ry="16.3" fill="#44367f" opacity="0.8" filter="url(#b5)" transform="rotate(0 340.8 632.7)"/>
<ellipse cx="340.8" cy="671.8" rx="14.7" ry="14.7" fill="#462f7b" opacity="0.85" filter="url(#b5)" transform="rotate(0 340.8 671.8)"/>
<ellipse cx="319.6" cy="580.5" rx="13.0" ry="19.6" fill="#414084" opacity="0.6" filter="url(#b5)" transform="rotate(0 319.6 580.5)"/>
<ellipse cx="265.7" cy="543.0" rx="26.1" ry="22.8" fill="#433980" opacity="0.75" filter="url(#b5)" transform="rotate(0 265.7 543.0)"/>
<ellipse cx="326.1" cy="609.9" rx="16.3" ry="9.8" fill="#3e4a89" opacity="0.5" filter="url(#b5)" transform="rotate(0 326.1 609.9)"/>
<ellipse cx="277.2" cy="649.0" rx="21.2" ry="16.3" fill="#2e708e" opacity="0.7" filter="url(#b5)" transform="rotate(0 277.2 649.0)"/>
<ellipse cx="306.5" cy="668.6" rx="22.8" ry="13.0" fill="#2f6d8e" opacity="0.7" filter="url(#b5)" transform="rotate(0 306.5 668.6)"/>
<ellipse cx="383.2" cy="636.0" rx="22.8" ry="16.3" fill="#31688e" opacity="0.6" filter="url(#b5)" transform="rotate(0 383.2 636.0)"/>
<ellipse cx="267.4" cy="598.4" rx="13.0" ry="32.6" fill="#32658e" opacity="0.5" filter="url(#b5)" transform="rotate(0 267.4 598.4)"/>
<ellipse cx="293.5" cy="547.9" rx="26.1" ry="13.0" fill="#355f8c" opacity="0.5" filter="url(#b5)" transform="rotate(0 293.5 547.9)"/>
<ellipse cx="358.7" cy="655.5" rx="9.8" ry="24.5" fill="#31688e" opacity="0.5" filter="url(#b5)" transform="rotate(-30 358.7 655.5)"/>
<polygon points="329.4,516.9 419.1,516.9 419.1,637.6 378.3,629.4 348.9,593.6 332.6,547.9" fill="#2a788e" opacity="0.85" filter="url(#b5)"/>
<polygon points="339.1,516.9 419.1,516.9 419.1,611.5 376.6,616.4 353.0,582.1 340.8,544.6" fill="#21968a" opacity="0.95" filter="url(#b3)"/>
<polygon points="348.1,516.9 419.1,516.9 419.1,583.8 374.4,604.2 358.4,574.8 348.9,543.0" fill="#4bc06c" opacity="1" filter="url(#b2)"/>
<polygon points="355.1,516.9 419.1,516.9 419.1,576.4 372.4,598.1 362.9,572.0 355.8,546.3" fill="#fde725" opacity="1" filter="url(#b1)"/>
</g>
<rect x="280.4" y="557.7" width="97.9" height="97.9" fill="none" stroke="#ff0000" stroke-width="1.25"/>
<text class="s" x="329.35" y="545.56" font-size="10.4" text-anchor="middle" fill="#ff0000">N</text>
<text class="s" x="265.41" y="610.50" font-size="10.4" text-anchor="middle" fill="#ff0000">E</text>
<path d="M292.7,606.6H322.0M336.7,606.6H366.0M329.4,569.9V599.3M329.4,613.9V643.3" stroke="#ff0000" stroke-width="1.25" fill="none"/>
<rect x="255.3" y="532.7" width="148.3" height="147.7" fill="none" stroke="#000" stroke-width="0.9"/>
<text class="s" x="264.11" y="695.40" font-size="10.6" text-anchor="middle">−4</text>
<text class="s" x="249.10" y="675.84" font-size="10.6" text-anchor="end">−4</text>
<text class="s" x="296.73" y="695.40" font-size="10.6" text-anchor="middle">−2</text>
<text class="s" x="249.10" y="643.22" font-size="10.6" text-anchor="end">−2</text>
<text class="s" x="329.35" y="695.40" font-size="10.6" text-anchor="middle">0</text>
<text class="s" x="249.10" y="610.60" font-size="10.6" text-anchor="end">0</text>
<text class="s" x="361.97" y="695.40" font-size="10.6" text-anchor="middle">2</text>
<text class="s" x="249.10" y="577.98" font-size="10.6" text-anchor="end">2</text>
<text class="s" x="394.59" y="695.40" font-size="10.6" text-anchor="middle">4</text>
<text class="s" x="249.10" y="545.36" font-size="10.6" text-anchor="end">4</text>
<path d="M264.1,680.4v3.6 M255.3,671.8h-3.6 M296.7,680.4v3.6 M255.3,639.2h-3.6 M329.4,680.4v3.6 M255.3,606.6h-3.6 M362.0,680.4v3.6 M255.3,574.0h-3.6 M394.6,680.4v3.6 M255.3,541.4h-3.6" stroke="#000" stroke-width="0.9" fill="none"/>
<text class="s" x="329.35" y="526.00" font-size="12.95" text-anchor="middle">Lineflux Map</text>
<clipPath id="cp2"><rect x="440.4" y="532.7" width="148.3" height="147.7"/></clipPath>
<g clip-path="url(#cp2)">
<rect x="440.4" y="532.7" width="148.3" height="147.7" filter="url(#nbg)"/>
<ellipse cx="560.8" cy="575.6" rx="31.8" ry="53.0" transform="rotate(14.9 560.8 575.6)" fill="#000" opacity="0.45" filter="url(#b5)"/>
<ellipse cx="560.8" cy="575.6" rx="28.5" ry="50.2" transform="rotate(14.9 560.8 575.6)" fill="#000" filter="url(#b3)"/>
<ellipse cx="570.7" cy="556.0" rx="30.2" ry="40.8" fill="#000" filter="url(#b3)"/>
<ellipse cx="579.7" cy="578.1" rx="22.0" ry="29.4" fill="#000" filter="url(#b3)"/>
<circle cx="514.4" cy="606.6" r="3.2" fill="#000" opacity="0.22" filter="url(#b1)"/>
</g>
<rect x="465.5" y="557.7" width="97.9" height="97.9" fill="none" stroke="#ff0000" stroke-width="1.25"/>
<text class="s" x="514.45" y="545.56" font-size="10.4" text-anchor="middle" fill="#ff0000">N</text>
<text class="s" x="450.51" y="610.50" font-size="10.4" text-anchor="middle" fill="#ff0000">E</text>
<path d="M477.8,606.6H507.1M521.8,606.6H551.1M514.4,569.9V599.3M514.4,613.9V643.3" stroke="#ff0000" stroke-width="1.25" fill="none"/>
<g clip-path="url(#cp2)"><ellipse cx="561.7" cy="575.3" rx="38.2" ry="59.7" transform="rotate(14.9 561.7 575.3)" fill="none" stroke="#ffd700" stroke-width="1.3"/></g>
<rect x="440.4" y="532.7" width="148.3" height="147.7" fill="none" stroke="#000" stroke-width="0.9"/>
<text class="s" x="449.21" y="695.40" font-size="10.6" text-anchor="middle">−4</text>
<text class="s" x="434.20" y="675.84" font-size="10.6" text-anchor="end">−4</text>
<text class="s" x="481.83" y="695.40" font-size="10.6" text-anchor="middle">−2</text>
<text class="s" x="434.20" y="643.22" font-size="10.6" text-anchor="end">−2</text>
<text class="s" x="514.45" y="695.40" font-size="10.6" text-anchor="middle">0</text>
<text class="s" x="434.20" y="610.60" font-size="10.6" text-anchor="end">0</text>
<text class="s" x="547.07" y="695.40" font-size="10.6" text-anchor="middle">2</text>
<text class="s" x="434.20" y="577.98" font-size="10.6" text-anchor="end">2</text>
<text class="s" x="579.69" y="695.40" font-size="10.6" text-anchor="middle">4</text>
<text class="s" x="434.20" y="545.36" font-size="10.6" text-anchor="end">4</text>
<path d="M449.2,680.4v3.6 M440.4,671.8h-3.6 M481.8,680.4v3.6 M440.4,639.2h-3.6 M514.4,680.4v3.6 M440.4,606.6h-3.6 M547.1,680.4v3.6 M440.4,574.0h-3.6 M579.7,680.4v3.6 M440.4,541.4h-3.6" stroke="#000" stroke-width="0.9" fill="none"/>
<text class="s" x="514.45" y="526.00" font-size="12.95" text-anchor="middle">HSC(26.2) r</text>
<text class="s" x="144.00" y="707.00" font-size="10.7" text-anchor="middle">arcsecs</text>
<text class="s" x="329.30" y="707.00" font-size="10.7" text-anchor="middle">s/b: 1.30 +/- 0.066</text>
<text class="s" x="514.40" y="707.00" font-size="10.7" text-anchor="middle">m:18.3  re:3.2"  s:3.8"</text>
<text class="s" x="514.40" y="719.00" font-size="10.7" text-anchor="middle">EWr: 0, PLAE: 0.108</text>
</svg></body></html>
